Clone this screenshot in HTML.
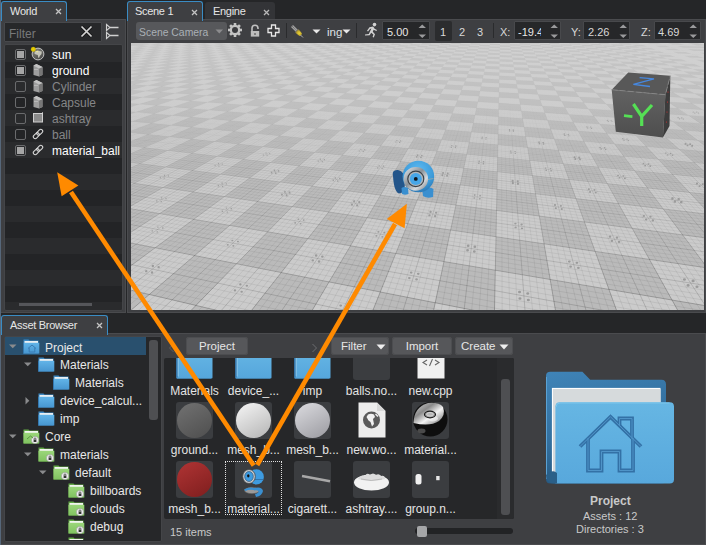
<!DOCTYPE html>
<html><head><meta charset="utf-8">
<style>
*{box-sizing:border-box;margin:0;padding:0}
html,body{width:706px;height:545px;overflow:hidden;background:#252628;font-family:"Liberation Sans",sans-serif;font-size:12px;color:#e6e6e6}
.a{position:absolute}
.tab{position:absolute;height:19px;background:#3b3c3f;border-radius:3px 3px 0 0}
.tab.act{border:1px solid #3a8cc4;border-bottom:none;background:#3e3f42}
.tab .t{position:absolute;top:3px;white-space:nowrap;font-size:11px;letter-spacing:-0.3px}
.tab .x{position:absolute;top:2px;font-size:12px;color:#bbb}
.panel{position:absolute;background:#3e3f42}
.list{position:absolute;background:#2a2b2d;border:1px solid #444548;border-radius:2px;overflow:hidden}
.row{position:absolute;left:0;right:0;height:16px}
.row.alt{background:#232426}
.cb{position:absolute;width:11px;height:11px;border:1px solid #6a6b6d;border-radius:2px}
.cb.on::after{content:"";position:absolute;left:1px;top:1px;width:7px;height:7px;background:#a6a6a6}
.rt{position:absolute;white-space:nowrap;font-size:12px}
.btn{position:absolute;background:#56575a;border-radius:3px;color:#e6e6e6;text-align:center;white-space:nowrap;font-size:11.5px;box-shadow:inset 0 0 0 1px #4c4d50}
.spin{position:absolute;background:#262729;border:1px solid #48494c;border-radius:1px;height:19px}
.lbl{position:absolute;white-space:nowrap;color:#d8d8d8}
.cell{position:absolute;width:37px;height:37px;background:#3a3c3f;border-radius:2px;overflow:hidden}
.clab{position:absolute;white-space:nowrap;font-size:12px;color:#e6e6e6}
</style></head><body>

<svg width="0" height="0" style="position:absolute"><defs>
<linearGradient id="gb" x1="0" y1="0" x2="0" y2="1"><stop offset="0" stop-color="#62b4e8"/><stop offset="1" stop-color="#4796d0"/></linearGradient>
<linearGradient id="gg" x1="0" y1="0" x2="0" y2="1"><stop offset="0" stop-color="#9bd77a"/><stop offset="1" stop-color="#80c260"/></linearGradient>
<linearGradient id="gbig" x1="0" y1="0" x2="0" y2="1"><stop offset="0" stop-color="#66b6e4"/><stop offset="1" stop-color="#55a6dc"/></linearGradient>
<symbol id="fb" viewBox="0 0 17 15"><path d="M0.5,0.5H5.5L6.5,1.5H15.5V14.5H0.5Z" fill="#3c88c2"/><rect x="1.5" y="2" width="13.5" height="2" fill="#e8eef2"/><path d="M0.5,3.8H16.3V14.5H0.5Z" fill="url(#gb)"/><path d="M0.5,3.8V14.5" stroke="#3478b0" stroke-width="1"/></symbol>
<symbol id="fg" viewBox="0 0 17 15"><path d="M0.5,0.5H5.5L6.5,1.5H15.5V14.5H0.5Z" fill="#62a845"/><rect x="1.5" y="2" width="13.5" height="2" fill="#f0f4ee"/><path d="M0.5,3.8H16.3V14.5H0.5Z" fill="url(#gg)"/><circle cx="12" cy="11" r="3.6" fill="#f2f2f2" stroke="#9a9a9a" stroke-width="0.6"/><rect x="10.6" y="10.6" width="2.8" height="2.4" fill="#333"/><path d="M11.1,10.7V9.8A0.9,0.9 0 0 1 12.9,9.8V10.7" fill="none" stroke="#333" stroke-width="0.8"/></symbol>
</defs></svg>
<!-- ============ WORLD PANEL ============ -->
<div class="panel" style="left:0;top:19px;width:126px;height:294px;border:1px solid #4a4b4e"></div>
<div class="tab act" style="left:1px;top:1px;width:66px;height:20px">
  <span class="t" style="left:8px">World</span>
</div>
<div class="a" style="left:4px;top:22px;width:98px;height:20px;background:#27282a;border:1px solid #47484b;border-radius:1px"></div>
<div class="a" style="left:9px;top:27px;color:#77787a">Filter</div>

<div class="list" style="left:4px;top:44px;width:119px;height:267px">
  <div class="rowNone" style="top:1px"></div>
  <div class="row alt" style="top:17px"></div>
  <div class="rowNone" style="top:33px"></div>
  <div class="row alt" style="top:49px"></div>
  <div class="rowNone" style="top:65px"></div>
  <div class="row alt" style="top:81px"></div>
  <div class="rowNone" style="top:97px"></div>
  <div class="row alt" style="top:113px"></div>
  <div class="rowNone" style="top:129px"></div>
  <div class="row alt" style="top:145px"></div>
  <div class="rowNone" style="top:161px"></div>
  <div class="row alt" style="top:177px"></div>
  <div class="rowNone" style="top:193px"></div>
  <div class="row alt" style="top:209px"></div>
  <div class="rowNone" style="top:225px"></div>
  <div class="row alt" style="top:241px"></div>
  <div class="a" style="left:14px;top:258px;width:73px;height:3px;background:#55565a"></div>
</div>
<div class="cb on" style="left:15px;top:49px"></div>
<div class="cb on" style="left:15px;top:65px"></div>
<div class="cb" style="left:15px;top:81px"></div>
<div class="cb" style="left:15px;top:97px"></div>
<div class="cb" style="left:15px;top:113px"></div>
<div class="cb" style="left:15px;top:129px"></div>
<div class="cb on" style="left:15px;top:145px"></div>

<!-- world icons -->
<svg class="a" style="left:80px;top:25px" width="13" height="13"><path d="M1.5,1.5L11.5,11.5M11.5,1.5L1.5,11.5" stroke="#1a1a1a" stroke-width="3.2"/><path d="M1.5,1.5L11.5,11.5M11.5,1.5L1.5,11.5" stroke="#d4d4d4" stroke-width="1.7"/></svg>
<svg class="a" style="left:105px;top:23px" width="15" height="17"><path d="M1.5,1.5L5,4.5L1.5,7.5Z M1.5,9.5L5,12.5L1.5,15.5Z" fill="none" stroke="#d0d0d0" stroke-width="1.1"/><path d="M5,4.5H13.5M5,12.5H13.5" stroke="#d0d0d0" stroke-width="1.3"/></svg>
<svg class="a" style="left:30px;top:46px" width="15" height="15"><defs><radialGradient id="sy" r="0.5"><stop offset="0" stop-color="#f0d800"/><stop offset="0.6" stop-color="#d8c000"/><stop offset="1" stop-color="#d8c000" stop-opacity="0"/></radialGradient><linearGradient id="gl" x1="0" y1="0" x2="0.6" y2="1"><stop offset="0" stop-color="#8a8a80"/><stop offset="1" stop-color="#4a4a4a"/></linearGradient></defs><circle cx="8" cy="8" r="5.9" fill="url(#gl)" stroke="#c0c0c0" stroke-width="1"/><path d="M4.5,6.5Q5,4.5 8,4.8L11.8,5.5L11.5,8L9.8,10L9,12L8.2,11.5L7.8,9L6,8.5L4.5,7.8Z" fill="#c4c4b8"/><path d="M5.5,5.8Q6.5,4.5 8.5,4.8L7.5,6.5Z" fill="#e8e4a0"/><circle cx="3.3" cy="3.3" r="3" fill="url(#sy)"/></svg>
<svg class="a" style="left:32px;top:63px" width="12" height="14"><path d="M1.5,2.5L4.5,1L10.5,4V12L7,13.5L1.5,12Z" fill="#9e9e9e"/><path d="M7,5.5L10.5,4V12L7,13.5Z" fill="#777"/><path d="M1.5,2.5L4.5,1L10.5,4L7,5.5Z" fill="#c4c4c4"/><path d="M2.5,6.5h1M4.5,6.5h1" stroke="#e0e0e0" stroke-width="0.8"/></svg>
<svg class="a" style="left:32px;top:79px" width="12" height="14"><path d="M1.5,2.5L4.5,1L10.5,4V12L7,13.5L1.5,12Z" fill="#9e9e9e"/><path d="M7,5.5L10.5,4V12L7,13.5Z" fill="#777"/><path d="M1.5,2.5L4.5,1L10.5,4L7,5.5Z" fill="#c4c4c4"/><path d="M2.5,6.5h1M4.5,6.5h1" stroke="#e0e0e0" stroke-width="0.8"/></svg>
<svg class="a" style="left:32px;top:95px" width="12" height="14"><path d="M1.5,2.5L4.5,1L10.5,4V12L7,13.5L1.5,12Z" fill="#9e9e9e"/><path d="M7,5.5L10.5,4V12L7,13.5Z" fill="#777"/><path d="M1.5,2.5L4.5,1L10.5,4L7,5.5Z" fill="#c4c4c4"/><path d="M2.5,6.5h1M4.5,6.5h1" stroke="#e0e0e0" stroke-width="0.8"/></svg>
<svg class="a" style="left:32px;top:112px" width="12" height="11"><rect x="1.5" y="1.5" width="9" height="8.5" fill="#8a8a8a" stroke="#cfcfcf" stroke-width="1"/><path d="M9.5,1.5L11,0.5" stroke="#ddd" stroke-width="1"/></svg>
<svg class="a" style="left:32px;top:128px" width="12" height="12"><g fill="none" stroke="#d8d8d8" stroke-width="1.1"><rect x="4.3" y="2.4" width="6.8" height="3.8" rx="1.9" transform="rotate(-45 7.7 4.3)"/><rect x="0.9" y="5.8" width="6.8" height="3.8" rx="1.9" transform="rotate(-45 4.3 7.7)"/></g></svg>
<svg class="a" style="left:32px;top:144px" width="12" height="12"><g fill="none" stroke="#d8d8d8" stroke-width="1.1"><rect x="4.3" y="2.4" width="6.8" height="3.8" rx="1.9" transform="rotate(-45 7.7 4.3)"/><rect x="0.9" y="5.8" width="6.8" height="3.8" rx="1.9" transform="rotate(-45 4.3 7.7)"/></g></svg>
<div class="rt" style="left:52px;top:48px;color:#fff">sun</div>
<div class="rt" style="left:52px;top:64px;color:#fff">ground</div>
<div class="rt" style="left:52px;top:80px;color:#858688">Cylinder</div>
<div class="rt" style="left:52px;top:96px;color:#858688">Capsule</div>
<div class="rt" style="left:52px;top:112px;color:#858688">ashtray</div>
<div class="rt" style="left:52px;top:128px;color:#858688">ball</div>
<div class="rt" style="left:52px;top:144px;color:#fff">material_ball</div>

<!-- ============ SCENE PANEL ============ -->
<div class="panel" style="left:127px;top:19px;width:579px;height:294px;border:1px solid #4a4b4e"></div>
<div class="tab act" style="left:127px;top:1px;width:76px;height:20px">
  <span class="t" style="left:7px">Scene 1</span>
</div>
<div class="tab" style="left:205px;top:2px;width:70px;height:17px;background:#333437">
  <span class="t" style="left:8px;top:3px">Engine</span>
</div>
<div class="a" style="left:136px;top:22px;width:91px;height:18px;background:#57585b;border-radius:3px"></div>
<div class="a" style="left:139px;top:27px;font-size:10.4px;color:#aab0b6;white-space:nowrap">Scene Camera</div>
<svg class="a" style="left:215px;top:29px" width="9" height="5"><path d="M0.5,0.5H8L4.25,4.5Z" fill="#8c8c8e"/></svg>
<!-- gear -->
<svg class="a" style="left:227px;top:22px" width="16" height="16"><g transform="translate(8 8)" fill="#c4c4c4"><circle r="5.3"/><g id="tooth"><rect x="-1.3" y="-7" width="2.6" height="3.5"/></g><use href="#tooth" transform="rotate(45)"/><use href="#tooth" transform="rotate(90)"/><use href="#tooth" transform="rotate(135)"/><use href="#tooth" transform="rotate(180)"/><use href="#tooth" transform="rotate(225)"/><use href="#tooth" transform="rotate(270)"/><use href="#tooth" transform="rotate(315)"/><circle r="3" fill="#3a3b3e"/></g></svg>
<!-- lock -->
<svg class="a" style="left:249px;top:24px" width="13" height="14"><path d="M3,7V4.2A3,3 0 0 1 9,4.2V5" fill="none" stroke="#c0c0c0" stroke-width="1.6"/><rect x="1.8" y="7" width="8.4" height="5.6" fill="#bdbdbd"/><rect x="5.4" y="9" width="1.2" height="2" fill="#555"/></svg>
<!-- plus -->
<svg class="a" style="left:267px;top:24px" width="13" height="13"><path d="M4.5,1H8.5V4.5H12V8.5H8.5V12H4.5V8.5H1V4.5H4.5Z" fill="#3a3a3c" stroke="#e8e8e8" stroke-width="1.3"/></svg>
<div class="a" style="left:286px;top:23px;width:1px;height:15px;background:#2a2b2d"></div>
<!-- flashlight -->
<svg class="a" style="left:290px;top:24px" width="15" height="15"><defs><radialGradient id="fy" cx="0.6" cy="0.6" r="0.6"><stop offset="0" stop-color="#f0d830"/><stop offset="0.6" stop-color="#b8a030"/><stop offset="1" stop-color="#6a6450"/></radialGradient></defs><path d="M2,2L7,7" stroke="#a0a0a0" stroke-width="2.8"/><path d="M2,2L7,7" stroke="#5a5a5a" stroke-width="1" stroke-dasharray="0.9 0.9"/><path d="M5,8.5L8.5,5L12,9.5Q11.5,12 9.5,12Z" fill="url(#fy)"/><path d="M10.5,11L13,13.5" stroke="#c8c8c8" stroke-width="0.8"/></svg>
<svg class="a" style="left:312px;top:29px" width="9" height="5"><path d="M0.5,0.5H8.5L4.5,4.5Z" fill="#e8e8e8"/></svg>
<div class="a" style="left:327px;top:26px;font-size:11.5px;color:#dfe2e6;white-space:nowrap">ing</div>
<svg class="a" style="left:342px;top:29px" width="9" height="5"><path d="M0.5,0.5H8.5L4.5,4.5Z" fill="#e8e8e8"/></svg>
<div class="a" style="left:356px;top:23px;width:1px;height:15px;background:#2a2b2d"></div>
<!-- runner -->
<svg class="a" style="left:363px;top:22px" width="16" height="16"><g fill="#d2d2d2"><circle cx="11.5" cy="2.6" r="1.8"/><path d="M6.5,5.2L10.2,4.6L11.6,6.8L14,8L13.4,9L10.6,7.8L9.8,9.8L12,12.2L10.8,15.4L9.6,15L10.4,12.6L8.2,10.8L6.6,13.2L2,13.6L2,12.4L5.8,12L8.4,6.6L7,7L5,9.4L4,8.8Z"/></g></svg>
<!--VP--><svg class="a" style="left:131px;top:43px" width="573" height="267" viewBox="0 0 573 267">
<defs><linearGradient id="fog" x1="0" y1="0" x2="0" y2="1"><stop offset="0" stop-color="#dcdcdc" stop-opacity="0.35"/><stop offset="0.25" stop-color="#d8d8d8" stop-opacity="0.18"/><stop offset="0.5" stop-color="#cccccc" stop-opacity="0.04"/><stop offset="1" stop-color="#c8c8c8" stop-opacity="0"/></linearGradient><linearGradient id="lg" gradientUnits="userSpaceOnUse" x1="0" y1="0" x2="0" y2="267"><stop offset="0" stop-color="#000" stop-opacity="0"/><stop offset="0.25" stop-color="#000" stop-opacity="0.03"/><stop offset="0.55" stop-color="#000" stop-opacity="0.13"/><stop offset="1" stop-color="#000" stop-opacity="0.26"/></linearGradient><linearGradient id="flg" gradientUnits="userSpaceOnUse" x1="0" y1="0" x2="0" y2="267"><stop offset="0" stop-color="#000" stop-opacity="0"/><stop offset="0.22" stop-color="#000" stop-opacity="0"/><stop offset="0.5" stop-color="#000" stop-opacity="0.06"/><stop offset="1" stop-color="#000" stop-opacity="0.10"/></linearGradient><linearGradient id="hlg" gradientUnits="userSpaceOnUse" x1="0" y1="0" x2="0" y2="267"><stop offset="0" stop-color="#000" stop-opacity="0"/><stop offset="0.22" stop-color="#000" stop-opacity="0"/><stop offset="0.5" stop-color="#000" stop-opacity="0.09"/><stop offset="1" stop-color="#000" stop-opacity="0.15"/></linearGradient></defs>
<rect width="573" height="267" fill="#bababa"/>
<path fill="#cbcbcb" d="M20.2,0.1L27.6,0.3L19.0,1.6L11.5,1.3ZM2.4,2.7L10.0,2.9L0.6,4.3L-7.3,4.0ZM35.8,-0.9L43.1,-0.7L35.1,0.6L27.6,0.3ZM19.0,1.6L26.7,1.9L17.8,3.2L10.0,2.9ZM0.6,4.3L8.5,4.7L-1.3,6.2L-9.4,5.8ZM35.1,0.6L42.7,0.8L34.4,2.1L26.7,1.9ZM17.8,3.2L25.7,3.5L16.5,5.0L8.5,4.7ZM-1.3,6.2L6.9,6.5L-3.4,8.1L-11.7,7.8ZM50.6,-0.4L58.2,-0.2L50.4,1.1L42.7,0.8ZM34.4,2.1L42.3,2.4L33.7,3.8L25.7,3.5ZM16.5,5.0L24.7,5.3L15.2,6.8L6.9,6.5ZM-3.4,8.1L5.1,8.5L-5.6,10.2L-14.2,9.8ZM65.5,-1.3L73.0,-1.1L65.8,0.1L58.2,-0.2ZM50.4,1.1L58.2,1.4L50.2,2.7L42.3,2.4ZM33.7,3.8L41.8,4.1L32.9,5.6L24.7,5.3ZM15.2,6.8L23.6,7.2L13.7,8.8L5.1,8.5ZM-5.6,10.2L3.2,10.6L-7.9,12.4L-16.8,12.0ZM65.8,0.1L73.5,0.4L66.1,1.6L58.2,1.4ZM50.2,2.7L58.2,3.0L50.0,4.4L41.8,4.1ZM32.9,5.6L41.3,5.9L32.1,7.5L23.6,7.2ZM13.7,8.8L22.4,9.2L12.1,10.9L3.2,10.6ZM-7.9,12.4L1.2,12.8L-10.4,14.8L-19.7,14.4ZM80.6,-0.9L88.3,-0.6L81.4,0.6L73.5,0.4ZM66.1,1.6L74.0,1.9L66.4,3.3L58.2,3.0ZM50.0,4.4L58.3,4.7L49.8,6.2L41.3,5.9ZM32.1,7.5L40.7,7.8L31.2,9.5L22.4,9.2ZM12.1,10.9L21.1,11.3L10.4,13.2L1.2,12.8ZM81.4,0.6L89.3,0.9L82.1,2.2L74.0,1.9ZM66.4,3.3L74.6,3.6L66.7,5.0L58.3,4.7ZM49.8,6.2L58.3,6.6L49.5,8.2L40.7,7.8ZM31.2,9.5L40.2,9.9L30.3,11.7L21.1,11.3ZM10.4,13.2L19.7,13.7L8.5,15.7L-1.0,15.3ZM96.1,-0.4L103.9,-0.1L97.3,1.2L89.3,0.9ZM82.1,2.2L90.3,2.5L82.9,3.9L74.6,3.6ZM66.7,5.0L75.2,5.4L67.0,6.9L58.3,6.6ZM49.5,8.2L58.4,8.6L49.2,10.3L40.2,9.9ZM30.3,11.7L39.5,12.1L29.2,14.1L19.7,13.7ZM8.5,15.7L18.2,16.2L6.5,18.4L-3.4,17.9ZM110.2,-1.3L118.0,-1.1L111.9,0.1L103.9,-0.1ZM97.3,1.2L105.4,1.4L98.6,2.8L90.3,2.5ZM82.9,3.9L91.4,4.2L83.8,5.7L75.2,5.4ZM67.0,6.9L75.8,7.2L67.4,8.9L58.4,8.6ZM49.2,10.3L58.4,10.7L48.9,12.5L39.5,12.1ZM29.2,14.1L38.9,14.5L28.1,16.7L18.2,16.2ZM6.5,18.4L16.6,18.9L4.4,21.3L-6.0,20.8ZM111.9,0.1L119.9,0.4L113.6,1.7L105.4,1.4ZM98.6,2.8L106.9,3.1L99.9,4.5L91.4,4.2ZM83.8,5.7L92.6,6.0L84.8,7.6L75.8,7.2ZM67.4,8.9L76.5,9.3L67.8,11.1L58.4,10.7ZM48.9,12.5L58.5,13.0L48.6,15.0L38.9,14.5ZM28.1,16.7L38.1,17.1L26.9,19.4L16.6,18.9ZM4.4,21.3L14.9,21.9L2.0,24.5L-8.8,23.9ZM125.9,-0.8L133.9,-0.6L128.1,0.7L119.9,0.4ZM113.6,1.7L121.9,2.0L115.4,3.3L106.9,3.1ZM99.9,4.5L108.6,4.8L101.4,6.3L92.6,6.0ZM84.8,7.6L93.8,7.9L85.8,9.6L76.5,9.3ZM67.8,11.1L77.2,11.5L68.2,13.4L58.5,13.0ZM48.6,15.0L58.6,15.4L48.3,17.6L38.1,17.1ZM26.9,19.4L37.3,19.9L25.6,22.4L14.9,21.9ZM2.0,24.5L13.0,25.1L-0.6,28.0L-11.8,27.3ZM128.1,0.7L136.3,0.9L130.3,2.3L121.9,2.0ZM115.4,3.3L124.0,3.6L117.4,5.1L108.6,4.8ZM101.4,6.3L110.4,6.7L103.0,8.3L93.8,7.9ZM85.8,9.6L95.2,10.0L86.9,11.9L77.2,11.5ZM68.2,13.4L78.0,13.8L68.6,15.9L58.6,15.4ZM48.3,17.6L58.6,18.1L47.9,20.5L37.3,19.9ZM25.6,22.4L36.5,23.0L24.1,25.7L13.0,25.1ZM-0.6,28.0L10.9,28.7L-3.4,31.8L-15.2,31.1ZM142.0,-0.3L150.1,-0.1L144.6,1.2L136.3,0.9ZM130.3,2.3L138.8,2.5L132.7,3.9L124.0,3.6ZM117.4,5.1L126.3,5.4L119.5,7.0L110.4,6.7ZM103.0,8.3L112.3,8.7L104.7,10.4L95.2,10.0ZM86.9,11.9L96.6,12.3L88.0,14.2L78.0,13.8ZM68.6,15.9L78.9,16.4L69.1,18.6L58.6,18.1ZM47.9,20.5L58.7,21.0L47.5,23.6L36.5,23.0ZM24.1,25.7L35.5,26.3L22.6,29.3L10.9,28.7ZM-3.4,31.8L8.6,32.5L-6.6,36.0L-18.9,35.2ZM155.4,-1.3L163.5,-1.0L158.4,0.2L150.1,-0.1ZM144.6,1.2L153.1,1.5L147.5,2.8L138.8,2.5ZM132.7,3.9L141.5,4.3L135.3,5.8L126.3,5.4ZM119.5,7.0L128.7,7.3L121.7,9.0L112.3,8.7ZM104.7,10.4L114.3,10.8L106.5,12.7L96.6,12.3ZM88.0,14.2L98.2,14.7L89.3,16.8L78.9,16.4ZM69.1,18.6L79.8,19.1L69.7,21.5L58.7,21.0ZM47.5,23.6L58.8,24.2L47.1,27.0L35.5,26.3ZM22.6,29.3L34.5,30.0L20.8,33.3L8.6,32.5ZM-6.6,36.0L6.1,36.8L-10.0,40.7L-23.0,39.8ZM158.4,0.2L166.8,0.5L161.6,1.8L153.1,1.5ZM147.5,2.8L156.2,3.1L150.5,4.6L141.5,4.3ZM135.3,5.8L144.4,6.1L138.0,7.7L128.7,7.3ZM121.7,9.0L131.3,9.4L124.1,11.2L114.3,10.8ZM106.5,12.7L116.5,13.1L108.5,15.1L98.2,14.7ZM89.3,16.8L99.9,17.3L90.7,19.6L79.8,19.1ZM69.7,21.5L80.8,22.1L70.2,24.8L58.8,24.2ZM47.1,27.0L58.9,27.6L46.6,30.7L34.5,30.0ZM20.8,33.3L33.3,34.1L18.9,37.7L6.1,36.8ZM-10.0,40.7L3.2,41.6L-13.9,46.0L-27.6,45.0ZM171.7,-0.8L180.0,-0.5L175.2,0.7L166.8,0.5ZM161.6,1.8L170.3,2.0L165.0,3.4L156.2,3.1ZM150.5,4.6L159.5,4.9L153.7,6.4L144.4,6.1ZM138.0,7.7L147.5,8.0L141.0,9.8L131.3,9.4ZM124.1,11.2L134.1,11.6L126.7,13.5L116.5,13.1ZM108.5,15.1L118.9,15.6L110.6,17.8L99.9,17.3ZM90.7,19.6L101.7,20.1L92.1,22.7L80.8,22.1ZM70.2,24.8L81.9,25.4L70.9,28.3L58.9,27.6ZM46.6,30.7L59.0,31.4L46.1,34.8L33.3,34.1ZM18.9,37.7L32.1,38.5L16.8,42.6L3.2,41.6ZM-13.9,46.0L0.1,47.0L-18.3,51.8L-32.8,50.7ZM175.2,0.7L183.8,1.0L179.0,2.3L170.3,2.0ZM165.0,3.4L174.0,3.7L168.7,5.2L159.5,4.9ZM153.7,6.4L163.1,6.7L157.1,8.4L147.5,8.0ZM141.0,9.8L150.8,10.1L144.2,12.0L134.1,11.6ZM126.7,13.5L137.1,14.0L129.5,16.0L118.9,15.6ZM110.6,17.8L121.5,18.3L112.9,20.7L101.7,20.1ZM92.1,22.7L103.7,23.2L93.8,26.0L81.9,25.4ZM70.9,28.3L83.1,28.9L71.6,32.1L59.0,31.4ZM46.1,34.8L59.1,35.6L45.5,39.4L32.1,38.5ZM16.8,42.6L30.7,43.5L14.4,48.0L0.1,47.0ZM188.4,-0.3L196.8,-0.0L192.5,1.3L183.8,1.0ZM179.0,2.3L187.9,2.6L183.0,4.0L174.0,3.7ZM168.7,5.2L177.9,5.5L172.6,7.1L163.1,6.7ZM157.1,8.4L166.9,8.8L160.8,10.5L150.8,10.1ZM144.2,12.0L154.4,12.4L147.6,14.4L137.1,14.0ZM129.5,16.0L140.3,16.5L132.6,18.8L121.5,18.3ZM112.9,20.7L124.3,21.2L115.4,23.8L103.7,23.2ZM93.8,26.0L105.9,26.6L95.6,29.6L83.1,28.9ZM71.6,32.1L84.4,32.9L72.3,36.4L59.1,35.6ZM45.5,39.4L59.2,40.3L44.8,44.5L30.7,43.5ZM14.4,48.0L29.1,49.1L11.7,54.2L-3.5,53.0ZM201.0,-1.2L209.4,-1.0L205.4,0.2L196.8,-0.0ZM192.5,1.3L201.3,1.5L196.9,2.9L187.9,2.6ZM183.0,4.0L192.2,4.3L187.3,5.8L177.9,5.5ZM172.6,7.1L182.2,7.4L176.7,9.1L166.9,8.8ZM160.8,10.5L170.9,10.9L164.8,12.8L154.4,12.4ZM147.6,14.4L158.3,14.8L151.3,17.0L140.3,16.5ZM132.6,18.8L143.9,19.3L135.9,21.8L124.3,21.2ZM115.4,23.8L127.4,24.4L118.2,27.3L105.9,26.6ZM95.6,29.6L108.3,30.3L97.5,33.6L84.4,32.9ZM72.3,36.4L85.9,37.2L73.2,41.2L59.2,40.3ZM44.8,44.5L59.3,45.5L44.1,50.2L29.1,49.1ZM11.7,54.2L27.3,55.4L8.7,61.1L-7.5,59.8ZM205.4,0.2L214.1,0.5L210.1,1.8L201.3,1.5ZM196.9,2.9L206.0,3.2L201.5,4.6L192.2,4.3ZM187.3,5.8L196.9,6.2L192.0,7.8L182.2,7.4ZM176.7,9.1L186.7,9.5L181.2,11.3L170.9,10.9ZM164.8,12.8L175.3,13.2L169.1,15.3L158.3,14.8ZM151.3,17.0L162.4,17.5L155.3,19.8L143.9,19.3ZM135.9,21.8L147.7,22.3L139.5,25.0L127.4,24.4ZM118.2,27.3L130.7,27.9L121.2,31.0L108.3,30.3ZM97.5,33.6L110.9,34.4L99.7,38.1L85.9,37.2ZM73.2,41.2L87.5,42.1L74.2,46.5L59.3,45.5ZM44.1,50.2L59.5,51.3L43.3,56.6L27.3,55.4ZM8.7,61.1L25.3,62.5L5.2,69.1L-12.1,67.6ZM217.9,-0.7L226.5,-0.5L222.9,0.8L214.1,0.5ZM210.1,1.8L219.1,2.1L215.2,3.5L206.0,3.2ZM201.5,4.6L211.0,4.9L206.5,6.5L196.9,6.2ZM192.0,7.8L201.9,8.1L196.9,9.9L186.7,9.5ZM181.2,11.3L191.6,11.7L186.1,13.7L175.3,13.2ZM169.1,15.3L180.1,15.7L173.8,18.0L162.4,17.5ZM155.3,19.8L167.0,20.3L159.7,22.9L147.7,22.3ZM139.5,25.0L151.9,25.6L143.5,28.6L130.7,27.9ZM121.2,31.0L134.4,31.7L124.5,35.2L110.9,34.4ZM99.7,38.1L113.8,38.9L102.1,43.0L87.5,42.1ZM74.2,46.5L89.3,47.5L75.2,52.5L59.5,51.3ZM43.3,56.6L59.7,57.9L42.3,64.0L25.3,62.5ZM5.2,69.1L23.0,70.7L1.2,78.4L-17.4,76.6ZM222.9,0.8L231.8,1.0L228.2,2.4L219.1,2.1ZM215.2,3.5L224.5,3.8L220.5,5.3L211.0,4.9ZM206.5,6.5L216.3,6.8L211.9,8.5L201.9,8.1ZM196.9,9.9L207.2,10.2L202.2,12.1L191.6,11.7ZM186.1,13.7L196.9,14.1L191.3,16.2L180.1,15.7ZM173.8,18.0L185.3,18.5L178.8,20.9L167.0,20.3ZM159.7,22.9L171.9,23.5L164.5,26.2L151.9,25.6ZM143.5,28.6L156.5,29.2L147.8,32.5L134.4,31.7ZM124.5,35.2L138.4,36.0L128.2,39.8L113.8,38.9ZM102.1,43.0L117.1,44.0L104.8,48.6L89.3,47.5ZM75.2,52.5L91.4,53.6L76.5,59.2L59.7,57.9ZM42.3,64.0L59.8,65.4L41.3,72.4L23.0,70.7ZM1.2,78.4L20.3,80.2L-3.5,89.2L-23.5,87.0ZM235.2,-0.2L244.0,0.0L240.8,1.3L231.8,1.0ZM228.2,2.4L237.5,2.7L233.9,4.1L224.5,3.8ZM220.5,5.3L230.2,5.6L226.2,7.2L216.3,6.8ZM211.9,8.5L222.1,8.9L217.6,10.6L207.2,10.2ZM202.2,12.1L212.9,12.5L208.0,14.5L196.9,14.1ZM191.3,16.2L202.6,16.7L196.9,19.0L185.3,18.5ZM178.8,20.9L190.9,21.4L184.3,24.1L171.9,23.5ZM164.5,26.2L177.3,26.9L169.7,29.9L156.5,29.2ZM147.8,32.5L161.5,33.2L152.6,36.8L138.4,36.0ZM128.2,39.8L143.0,40.7L132.4,45.0L117.1,44.0ZM104.8,48.6L120.7,49.7L107.9,54.8L91.4,53.6ZM76.5,59.2L93.7,60.6L77.8,66.9L59.8,65.4ZM41.3,72.4L60.1,74.1L40.0,82.2L20.3,80.2ZM-3.5,89.2L17.1,91.4L-9.1,102.0L-30.8,99.4ZM247.1,-1.2L255.8,-1.0L252.9,0.3L244.0,0.0ZM240.8,1.3L249.9,1.6L246.8,2.9L237.5,2.7ZM233.9,4.1L243.5,4.4L240.0,5.9L230.2,5.6ZM226.2,7.2L236.3,7.5L232.4,9.2L222.1,8.9ZM217.6,10.6L228.2,11.0L223.8,12.9L212.9,12.5ZM208.0,14.5L219.2,15.0L214.2,17.2L202.6,16.7ZM196.9,19.0L208.8,19.5L203.1,22.0L190.9,21.4ZM184.3,24.1L197.0,24.7L190.4,27.5L177.3,26.9ZM169.7,29.9L183.2,30.6L175.5,34.0L161.5,33.2ZM152.6,36.8L167.1,37.7L158.0,41.6L143.0,40.7ZM132.4,45.0L148.0,46.0L137.0,50.8L120.7,49.7ZM107.9,54.8L124.9,56.1L111.4,61.9L93.7,60.6ZM77.8,66.9L96.3,68.5L79.5,75.8L60.1,74.1ZM40.0,82.2L60.3,84.2L38.5,93.7L17.1,91.4ZM-9.1,102.0L13.4,104.6L-15.8,117.4L-39.6,114.2ZM252.9,0.3L262.0,0.5L259.2,1.9L249.9,1.6ZM246.8,2.9L256.3,3.2L253.2,4.7L243.5,4.4ZM240.0,5.9L249.9,6.2L246.5,7.9L236.3,7.5ZM232.4,9.2L242.9,9.6L239.0,11.4L228.2,11.0ZM223.8,12.9L234.9,13.4L230.5,15.4L219.2,15.0ZM214.2,17.2L225.9,17.7L220.9,20.0L208.8,19.5ZM203.1,22.0L215.6,22.5L209.8,25.3L197.0,24.7ZM190.4,27.5L203.7,28.2L197.0,31.4L183.2,30.6ZM175.5,34.0L189.8,34.8L181.9,38.5L167.1,37.7ZM158.0,41.6L173.4,42.6L164.0,47.0L148.0,46.0ZM137.0,50.8L153.7,51.9L142.2,57.3L124.9,56.1ZM111.4,61.9L129.6,63.4L115.4,70.1L96.3,68.5ZM79.5,75.8L99.4,77.7L81.3,86.2L60.3,84.2ZM38.5,93.7L60.6,96.1L36.8,107.4L13.4,104.6ZM-15.8,117.4L8.9,120.6L-24.1,136.2L-50.3,132.4ZM264.6,-0.7L273.5,-0.5L271.1,0.8L262.0,0.5ZM259.2,1.9L268.5,2.1L265.8,3.5L256.3,3.2ZM253.2,4.7L263.0,5.0L260.0,6.6L249.9,6.2ZM246.5,7.9L256.8,8.2L253.5,10.0L242.9,9.6ZM239.0,11.4L249.9,11.8L246.1,13.8L234.9,13.4ZM230.5,15.4L242.1,15.9L237.8,18.2L225.9,17.7ZM220.9,20.0L233.2,20.5L228.3,23.1L215.6,22.5ZM209.8,25.3L222.9,25.9L217.2,28.9L203.7,28.2ZM197.0,31.4L211.0,32.1L204.3,35.6L189.8,34.8ZM181.9,38.5L197.0,39.4L189.1,43.5L173.4,42.6ZM164.0,47.0L180.3,48.1L170.7,53.1L153.7,51.9ZM142.2,57.3L160.1,58.6L148.2,64.8L129.6,63.4ZM115.4,70.1L135.0,71.7L120.0,79.5L99.4,77.7ZM81.3,86.2L103.0,88.4L83.5,98.5L60.6,96.1ZM36.8,107.4L61.0,110.2L34.6,124.0L8.9,120.6ZM-24.1,136.2L3.3,140.3L-34.4,160.0L-63.7,155.0ZM271.1,0.8L280.3,1.1L278.0,2.4L268.5,2.1ZM265.8,3.5L275.5,3.8L273.0,5.3L263.0,5.0ZM260.0,6.6L270.2,6.9L267.3,8.6L256.8,8.2ZM253.5,10.0L264.3,10.4L261.0,12.2L249.9,11.8ZM246.1,13.8L257.5,14.2L253.8,16.4L242.1,15.9ZM237.8,18.2L249.9,18.7L245.7,21.1L233.2,20.5ZM228.3,23.1L241.2,23.7L236.3,26.5L222.9,25.9ZM217.2,28.9L231.0,29.5L225.4,32.8L211.0,32.1ZM204.3,35.6L219.2,36.4L212.5,40.3L197.0,39.4ZM189.1,43.5L205.2,44.5L197.1,49.2L180.3,48.1ZM170.7,53.1L188.2,54.3L178.4,60.0L160.1,58.6ZM148.2,64.8L167.4,66.3L155.1,73.4L135.0,71.7ZM120.0,79.5L141.2,81.4L125.4,90.6L103.0,88.4ZM83.5,98.5L107.3,101.1L86.2,113.2L61.0,110.2ZM34.6,124.0L61.5,127.5L32.0,144.5L3.3,140.3ZM282.5,-0.2L291.7,0.1L289.7,1.4L280.3,1.1ZM278.0,2.4L287.6,2.7L285.4,4.1L275.5,3.8ZM273.0,5.3L283.0,5.7L280.6,7.3L270.2,6.9ZM267.3,8.6L278.0,9.0L275.2,10.8L264.3,10.4ZM261.0,12.2L272.2,12.7L269.1,14.7L257.5,14.2ZM253.8,16.4L265.8,16.9L262.2,19.2L249.9,18.7ZM245.7,21.1L258.4,21.6L254.3,24.3L241.2,23.7ZM236.3,26.5L249.9,27.2L245.1,30.2L231.0,29.5ZM225.4,32.8L240.0,33.6L234.4,37.2L219.2,36.4ZM212.5,40.3L228.3,41.2L221.6,45.5L205.2,44.5ZM197.1,49.2L214.2,50.3L206.1,55.5L188.2,54.3ZM178.4,60.0L197.2,61.3L187.1,67.8L167.4,66.3ZM155.1,73.4L175.9,75.1L163.1,83.4L141.2,81.4ZM125.4,90.6L148.6,92.8L131.8,103.7L107.3,101.1ZM86.2,113.2L112.4,116.3L89.4,131.2L61.5,127.5ZM32.0,144.5L62.0,149.0L28.6,170.6L-3.7,165.1ZM293.6,-1.2L302.6,-0.9L300.9,0.3L291.7,0.1ZM289.7,1.4L299.2,1.6L297.3,3.0L287.6,2.7ZM285.4,4.1L295.3,4.5L293.3,6.0L283.0,5.7ZM280.6,7.3L291.1,7.6L288.7,9.3L278.0,9.0ZM275.2,10.8L286.3,11.2L283.7,13.1L272.2,12.7ZM269.1,14.7L280.9,15.1L277.9,17.3L265.8,16.9ZM262.2,19.2L274.7,19.7L271.3,22.2L258.4,21.6ZM254.3,24.3L267.7,24.9L263.7,27.8L249.9,27.2ZM245.1,30.2L259.5,31.0L254.9,34.4L240.0,33.6ZM234.4,37.2L249.8,38.1L244.4,42.1L228.3,41.2ZM221.6,45.5L238.4,46.5L231.8,51.4L214.2,50.3ZM206.1,55.5L224.5,56.8L216.4,62.7L197.2,61.3ZM187.1,67.8L207.4,69.4L197.2,76.9L175.9,75.1ZM163.1,83.4L185.7,85.5L172.5,95.2L148.6,92.8ZM131.8,103.7L157.3,106.4L139.6,119.5L112.4,116.3ZM89.4,131.2L118.6,135.0L93.5,153.6L62.0,149.0ZM28.6,170.6L62.7,176.3L24.2,204.8L-12.8,197.5ZM300.9,0.3L310.3,0.6L308.7,1.9L299.2,1.6ZM297.3,3.0L307.1,3.3L305.4,4.8L295.3,4.5ZM293.3,6.0L303.6,6.3L301.7,8.0L291.1,7.6ZM288.7,9.3L299.7,9.7L297.5,11.6L286.3,11.2ZM283.7,13.1L295.2,13.5L292.8,15.6L280.9,15.1ZM277.9,17.3L290.2,17.8L287.4,20.2L274.7,19.7ZM271.3,22.2L284.5,22.8L281.3,25.5L267.7,24.9ZM263.7,27.8L277.8,28.5L274.1,31.7L259.5,31.0ZM254.9,34.4L270.1,35.2L265.7,38.9L249.8,38.1ZM244.4,42.1L260.9,43.1L255.6,47.6L238.4,46.5ZM231.8,51.4L249.8,52.5L243.4,58.1L224.5,56.8ZM216.4,62.7L236.3,64.2L228.3,71.0L207.4,69.4ZM197.2,76.9L219.3,78.8L209.1,87.6L185.7,85.5ZM172.5,95.2L197.3,97.6L183.8,109.3L157.3,106.4ZM139.6,119.5L168.0,122.9L149.2,139.0L118.6,135.0ZM93.5,153.6L126.5,158.5L98.7,182.4L62.7,176.3ZM24.2,204.8L63.6,212.5L18.2,251.5L-25.2,241.3ZM311.8,-0.7L321.0,-0.4L319.8,0.9L310.3,0.6ZM308.7,1.9L318.5,2.2L317.1,3.6L307.1,3.3ZM305.4,4.8L315.6,5.1L314.1,6.7L303.6,6.3ZM301.7,8.0L312.5,8.3L310.8,10.1L299.7,9.7ZM297.5,11.6L308.9,12.0L307.0,14.0L295.2,13.5ZM292.8,15.6L304.9,16.1L302.7,18.3L290.2,17.8ZM287.4,20.2L300.4,20.8L297.8,23.4L284.5,22.8ZM281.3,25.5L295.1,26.2L292.2,29.2L277.8,28.5ZM274.1,31.7L289.0,32.4L285.6,36.0L270.1,35.2ZM265.7,38.9L281.8,39.8L277.7,44.0L260.9,43.1ZM255.6,47.6L273.2,48.6L268.2,53.7L249.8,52.5ZM243.4,58.1L262.7,59.4L256.6,65.7L236.3,64.2ZM228.3,71.0L249.8,72.7L242.0,80.7L219.3,78.8ZM209.1,87.6L233.2,89.7L223.0,100.1L197.3,97.6ZM183.8,109.3L211.3,112.2L197.5,126.4L168.0,122.9ZM149.2,139.0L181.1,143.2L161.2,163.6L126.5,158.5ZM98.7,182.4L136.7,188.8L105.6,220.7L63.6,212.5ZM18.2,251.5L64.9,262.4L9.5,319.3L-43.0,304.1ZM319.8,0.9L329.4,1.1L328.3,2.5L318.5,2.2ZM317.1,3.6L327.2,3.9L326.0,5.4L315.6,5.1ZM314.1,6.7L324.7,7.0L323.4,8.7L312.5,8.3ZM310.8,10.1L322.0,10.5L320.5,12.4L308.9,12.0ZM307.0,14.0L319.0,14.4L317.3,16.5L304.9,16.1ZM302.7,18.3L315.5,18.8L313.5,21.3L300.4,20.8ZM297.8,23.4L311.5,23.9L309.2,26.8L295.1,26.2ZM292.2,29.2L306.8,29.9L304.2,33.2L289.0,32.4ZM285.6,36.0L301.4,36.8L298.3,40.7L281.8,39.8ZM277.7,44.0L294.9,45.0L291.2,49.7L273.2,48.6ZM268.2,53.7L287.1,55.0L282.6,60.7L262.7,59.4ZM256.6,65.7L277.5,67.2L271.9,74.4L249.8,72.7ZM242.0,80.7L265.4,82.6L258.1,92.0L233.2,89.7ZM223.0,100.1L249.7,102.8L239.9,115.3L211.3,112.2ZM197.5,126.4L228.3,130.0L214.5,147.6L181.1,143.2ZM161.2,163.6L197.7,169.0L176.9,195.6L136.7,188.8ZM105.6,220.7L150.3,229.5L115.2,274.2L64.9,262.4ZM330.4,-0.2L339.8,0.1L339.1,1.4L329.4,1.1ZM328.3,2.5L338.2,2.8L337.4,4.2L327.2,3.9ZM326.0,5.4L336.5,5.7L335.5,7.4L324.7,7.0ZM323.4,8.7L334.5,9.1L333.4,10.9L322.0,10.5ZM320.5,12.4L332.3,12.8L331.1,14.8L319.0,14.4ZM317.3,16.5L329.8,17.0L328.4,19.4L315.5,18.8ZM313.5,21.3L326.9,21.9L325.3,24.5L311.5,23.9ZM309.2,26.8L323.6,27.4L321.7,30.6L306.8,29.9ZM304.2,33.2L319.7,33.9L317.6,37.6L301.4,36.8ZM298.3,40.7L315.2,41.6L312.6,46.0L294.9,45.0ZM291.2,49.7L309.7,50.9L306.5,56.2L287.1,55.0ZM282.6,60.7L303.0,62.1L299.1,68.8L277.5,67.2ZM271.9,74.4L294.6,76.2L289.6,84.7L265.4,82.6ZM258.1,92.0L283.9,94.3L277.3,105.5L249.7,102.8ZM239.9,115.3L269.6,118.5L260.5,133.8L228.3,130.0ZM214.5,147.6L249.5,152.2L236.2,174.7L197.7,169.0ZM176.9,195.6L219.5,202.8L198.1,238.9L150.3,229.5ZM340.6,-1.1L349.9,-0.9L349.4,0.4L339.8,0.1ZM339.1,1.4L348.9,1.7L348.3,3.1L338.2,2.8ZM337.4,4.2L347.7,4.5L347.1,6.1L336.5,5.7ZM335.5,7.4L346.5,7.7L345.8,9.4L334.5,9.1ZM333.4,10.9L345.0,11.3L344.2,13.2L332.3,12.8ZM331.1,14.8L343.4,15.3L342.5,17.5L329.8,17.0ZM328.4,19.4L341.6,19.9L340.5,22.4L326.9,21.9ZM325.3,24.5L339.4,25.2L338.2,28.1L323.6,27.4ZM321.7,30.6L337.0,31.3L335.6,34.7L319.7,33.9ZM317.6,37.6L334.1,38.5L332.4,42.6L315.2,41.6ZM312.6,46.0L330.6,47.1L328.6,52.0L309.7,50.9ZM306.5,56.2L326.4,57.5L324.0,63.6L303.0,62.1ZM299.1,68.8L321.2,70.4L318.1,78.1L294.6,76.2ZM289.6,84.7L314.6,86.8L310.6,96.7L283.9,94.3ZM277.3,105.5L305.9,108.3L300.5,121.8L269.6,118.5ZM260.5,133.8L294.1,137.8L286.3,157.0L249.5,152.2ZM236.2,174.7L276.8,180.7L264.8,210.4L219.5,202.8ZM198.1,238.9L249.3,248.9L228.4,300.8L169.5,287.0ZM349.4,0.4L359.1,0.6L358.8,2.0L348.9,1.7ZM348.3,3.1L358.5,3.4L358.2,4.8L347.7,4.5ZM347.1,6.1L357.9,6.4L357.6,8.1L346.5,7.7ZM345.8,9.4L357.2,9.8L356.8,11.7L345.0,11.3ZM344.2,13.2L356.4,13.7L355.9,15.8L343.4,15.3ZM342.5,17.5L355.4,18.0L354.9,20.4L341.6,19.9ZM340.5,22.4L354.4,23.0L353.8,25.8L339.4,25.2ZM338.2,28.1L353.2,28.8L352.5,32.0L337.0,31.3ZM335.6,34.7L351.7,35.5L350.9,39.4L334.1,38.5ZM332.4,42.6L350.0,43.5L349.1,48.1L330.6,47.1ZM328.6,52.0L348.0,53.2L346.8,58.8L326.4,57.5ZM324.0,63.6L345.5,65.0L344.0,72.0L321.2,70.4ZM318.1,78.1L342.3,79.9L340.4,88.9L314.6,86.8ZM310.6,96.7L338.2,99.2L335.7,111.2L305.9,108.3ZM300.5,121.8L332.7,125.2L329.2,141.9L294.1,137.8ZM286.3,157.0L324.9,162.1L319.6,187.0L276.8,180.7ZM264.8,210.4L313.0,218.6L304.2,259.7L249.3,248.9ZM359.4,-0.6L369.0,-0.4L369.0,0.9L359.1,0.6ZM358.8,2.0L368.9,2.3L368.9,3.7L358.5,3.4ZM358.2,4.8L368.9,5.2L368.8,6.8L357.9,6.4ZM357.6,8.1L368.8,8.4L368.8,10.2L357.2,9.8ZM356.8,11.7L368.7,12.1L368.7,14.1L356.4,13.7ZM355.9,15.8L368.6,16.2L368.6,18.5L355.4,18.0ZM354.9,20.4L368.5,21.0L368.5,23.6L354.4,23.0ZM353.8,25.8L368.4,26.4L368.4,29.5L353.2,28.8ZM352.5,32.0L368.3,32.8L368.2,36.4L351.7,35.5ZM350.9,39.4L368.1,40.3L368.1,44.5L350.0,43.5ZM349.1,48.1L368.0,49.2L367.9,54.4L348.0,53.2ZM346.8,58.8L367.7,60.1L367.6,66.6L345.5,65.0ZM344.0,72.0L367.5,73.8L367.3,81.9L342.3,79.9ZM340.4,88.9L367.1,91.2L366.9,101.8L338.2,99.2ZM335.7,111.2L366.6,114.2L366.3,128.8L332.7,125.2ZM329.2,141.9L366.0,146.3L365.5,167.4L324.9,162.1ZM319.6,187.0L365.0,193.7L364.3,227.2L313.0,218.6ZM304.2,259.7L363.4,271.3L362.2,332.1L292.4,315.7ZM369.0,0.9L378.9,1.2L379.1,2.5L368.9,2.3ZM368.9,3.7L379.4,4.0L379.6,5.5L368.9,5.2ZM368.8,6.8L379.9,7.1L380.2,8.8L368.8,8.4ZM368.8,10.2L380.5,10.6L380.8,12.5L368.7,12.1ZM368.7,14.1L381.2,14.5L381.6,16.7L368.6,16.2ZM368.6,18.5L382.0,19.0L382.4,21.5L368.5,21.0ZM368.5,23.6L382.8,24.2L383.3,27.1L368.4,26.4ZM368.4,29.5L383.9,30.2L384.4,33.5L368.3,32.8ZM368.2,36.4L385.1,37.2L385.7,41.2L368.1,40.3ZM368.1,44.5L386.5,45.5L387.3,50.3L368.0,49.2ZM367.9,54.4L388.2,55.6L389.2,61.5L367.7,60.1ZM367.6,66.6L390.4,68.1L391.6,75.5L367.5,73.8ZM367.3,81.9L393.1,83.9L394.7,93.5L367.1,91.2ZM366.9,101.8L396.6,104.5L398.8,117.4L366.6,114.2ZM366.3,128.8L401.4,132.6L404.5,150.8L366.0,146.3ZM365.5,167.4L408.3,173.1L413.1,200.8L365.0,193.7ZM364.3,227.2L419.2,236.5L427.3,283.9L363.4,271.3ZM378.7,-0.1L388.5,0.1L389.0,1.5L378.9,1.2ZM379.1,2.5L389.5,2.8L390.0,4.3L379.4,4.0ZM379.6,5.5L390.6,5.8L391.1,7.4L379.9,7.1ZM380.2,8.8L391.8,9.2L392.4,11.0L380.5,10.6ZM380.8,12.5L393.1,12.9L393.9,15.0L381.2,14.5ZM381.6,16.7L394.7,17.2L395.5,19.6L382.0,19.0ZM382.4,21.5L396.5,22.1L397.4,24.8L382.8,24.2ZM383.3,27.1L398.5,27.7L399.7,30.9L383.9,30.2ZM384.4,33.5L400.9,34.3L402.3,38.0L385.1,37.2ZM385.7,41.2L403.7,42.1L405.4,46.6L386.5,45.5ZM387.3,50.3L407.1,51.5L409.1,56.9L388.2,55.6ZM389.2,61.5L411.3,63.0L413.8,69.7L390.4,68.1ZM391.6,75.5L416.5,77.3L419.7,86.0L393.1,83.9ZM394.7,93.5L423.3,95.9L427.4,107.3L396.6,104.5ZM398.8,117.4L432.3,120.7L438.0,136.5L401.4,132.6ZM404.5,150.8L445.0,155.6L453.5,179.0L408.3,173.1ZM413.1,200.8L464.1,208.4L478.0,246.4L419.2,236.5ZM388.0,-1.1L397.7,-0.9L398.4,0.4L388.5,0.1ZM389.0,1.5L399.2,1.7L399.9,3.1L389.5,2.8ZM390.0,4.3L400.8,4.6L401.6,6.2L390.6,5.8ZM391.1,7.4L402.5,7.8L403.5,9.5L391.8,9.2ZM392.4,11.0L404.5,11.4L405.6,13.4L393.1,12.9ZM393.9,15.0L406.8,15.5L408.0,17.7L394.7,17.2ZM395.5,19.6L409.4,20.1L410.8,22.7L396.5,22.1ZM397.4,24.8L412.3,25.4L414.0,28.4L398.5,27.7ZM399.7,30.9L415.8,31.6L417.7,35.1L400.9,34.3ZM402.3,38.0L419.8,38.9L422.1,43.1L403.7,42.1ZM405.4,46.6L424.7,47.6L427.5,52.7L407.1,51.5ZM409.1,56.9L430.5,58.2L434.0,64.4L411.3,63.0ZM413.8,69.7L437.9,71.4L442.2,79.2L416.5,77.3ZM419.7,86.0L447.2,88.1L452.8,98.3L423.3,95.9ZM427.4,107.3L459.4,110.2L467.2,124.1L432.3,120.7ZM438.0,136.5L476.3,140.6L487.4,160.6L445.0,155.6ZM453.5,179.0L501.1,185.2L518.5,216.4L464.1,208.4ZM478.0,246.4L541.0,257.0L571.7,312.2L496.5,297.5ZM398.4,0.4L408.5,0.7L409.5,2.0L399.2,1.7ZM399.9,3.1L410.5,3.4L411.7,4.9L400.8,4.6ZM401.6,6.2L412.8,6.5L414.1,8.2L402.5,7.8ZM403.5,9.5L415.4,9.9L416.8,11.8L404.5,11.4ZM405.6,13.4L418.3,13.8L419.9,15.9L406.8,15.5ZM408.0,17.7L421.6,18.2L423.4,20.6L409.4,20.1ZM410.8,22.7L425.4,23.2L427.5,26.1L412.3,25.4ZM414.0,28.4L429.7,29.1L432.2,32.4L415.8,31.6ZM417.7,35.1L434.9,35.9L437.8,39.8L419.8,38.9ZM422.1,43.1L440.9,44.0L444.4,48.7L424.7,47.6ZM427.5,52.7L448.3,53.9L452.5,59.6L430.5,58.2ZM434.0,64.4L457.3,65.9L462.7,73.1L437.9,71.4ZM442.2,79.2L468.7,81.1L475.6,90.3L447.2,88.1ZM452.8,98.3L483.5,100.9L492.7,113.2L459.4,110.2ZM467.2,124.1L503.5,127.7L516.4,144.9L476.3,140.6ZM487.4,160.6L532.1,165.9L551.6,191.9L501.1,185.2ZM518.5,216.4L576.3,224.9L608.9,268.5L541.0,257.0ZM407.5,-0.6L417.4,-0.3L418.7,1.0L408.5,0.7ZM409.5,2.0L419.9,2.3L421.3,3.7L410.5,3.4ZM411.7,4.9L422.7,5.2L424.2,6.8L412.8,6.5ZM414.1,8.2L425.8,8.5L427.5,10.3L415.4,9.9ZM416.8,11.8L429.3,12.2L431.2,14.2L418.3,13.8ZM419.9,15.9L433.2,16.4L435.4,18.7L421.6,18.2ZM423.4,20.6L437.7,21.2L440.2,23.8L425.4,23.2ZM427.5,26.1L442.9,26.7L445.8,29.8L429.7,29.1ZM432.2,32.4L448.9,33.1L452.4,36.8L434.9,35.9ZM437.8,39.8L456.1,40.7L460.2,45.0L440.9,44.0ZM444.4,48.7L464.7,49.8L469.6,55.1L448.3,53.9ZM452.5,59.6L475.1,60.9L481.3,67.5L457.3,65.9ZM462.7,73.1L488.2,74.8L496.0,83.1L468.7,81.1ZM475.6,90.3L505.0,92.6L515.3,103.6L483.5,100.9ZM492.7,113.2L527.3,116.3L541.5,131.4L503.5,127.7ZM516.4,144.9L558.5,149.4L579.2,171.4L532.1,165.9ZM551.6,191.9L605.0,198.9L638.2,234.1L576.3,224.9ZM418.7,1.0L429.0,1.2L430.5,2.6L419.9,2.3ZM421.3,3.7L432.2,4.0L433.9,5.6L422.7,5.2ZM424.2,6.8L435.7,7.2L437.7,8.9L425.8,8.5ZM427.5,10.3L439.7,10.7L441.9,12.6L429.3,12.2ZM431.2,14.2L444.3,14.7L446.7,16.9L433.2,16.4ZM435.4,18.7L449.4,19.2L452.3,21.7L437.7,21.2ZM440.2,23.8L455.3,24.4L458.6,27.4L442.9,26.7ZM445.8,29.8L462.2,30.5L466.0,33.9L448.9,33.1ZM452.4,36.8L470.2,37.6L474.8,41.6L456.1,40.7ZM460.2,45.0L479.9,46.1L485.4,50.9L464.7,49.8ZM469.6,55.1L491.5,56.3L498.3,62.3L475.1,60.9ZM481.3,67.5L505.9,69.0L514.5,76.6L488.2,74.8ZM496.0,83.1L524.2,85.2L535.4,95.0L505.0,92.6ZM515.3,103.6L548.2,106.3L563.3,119.6L527.3,116.3ZM541.5,131.4L581.1,135.3L602.5,154.2L558.5,149.4ZM427.5,-0.1L437.7,0.2L439.4,1.5L429.0,1.2ZM430.5,2.6L441.2,2.9L443.2,4.4L432.2,4.0ZM433.9,5.6L445.2,5.9L447.4,7.5L435.7,7.2ZM437.7,8.9L449.7,9.3L452.2,11.1L439.7,10.7ZM441.9,12.6L454.8,13.1L457.5,15.2L444.3,14.7ZM446.7,16.9L460.5,17.4L463.7,19.8L449.4,19.2ZM452.3,21.7L467.0,22.3L470.7,25.1L455.3,24.4ZM458.6,27.4L474.6,28.0L478.9,31.2L462.2,30.5ZM466.0,33.9L483.5,34.7L488.5,38.5L470.2,37.6ZM474.8,41.6L494.0,42.6L500.0,47.1L479.9,46.1ZM485.4,50.9L506.6,52.1L514.0,57.6L491.5,56.3ZM498.3,62.3L522.2,63.8L531.3,70.7L505.9,69.0ZM514.5,76.6L541.6,78.5L553.4,87.3L524.2,85.2ZM535.4,95.0L566.9,97.4L582.5,109.2L548.2,106.3ZM563.3,119.6L600.8,123.0L622.5,139.3L581.1,135.3ZM436.0,-1.1L446.0,-0.8L447.9,0.5L437.7,0.2ZM439.4,1.5L450.0,1.8L452.1,3.2L441.2,2.9ZM443.2,4.4L454.4,4.7L456.8,6.2L445.2,5.9ZM447.4,7.5L459.3,7.9L462.0,9.7L449.7,9.3ZM452.2,11.1L464.8,11.5L467.8,13.5L454.8,13.1ZM457.5,15.2L471.0,15.6L474.5,17.9L460.5,17.4ZM463.7,19.8L478.2,20.3L482.1,22.9L467.0,22.3ZM470.7,25.1L486.4,25.7L490.9,28.7L474.6,28.0ZM478.9,31.2L495.9,32.0L501.3,35.5L483.5,34.7ZM488.5,38.5L507.2,39.3L513.6,43.6L494.0,42.6ZM500.0,47.1L520.6,48.2L528.4,53.3L506.6,52.1ZM514.0,57.6L537.0,59.0L546.6,65.3L522.2,63.8ZM531.3,70.7L557.4,72.4L569.6,80.4L541.6,78.5ZM553.4,87.3L583.5,89.5L599.5,100.0L566.9,97.4ZM447.9,0.5L458.4,0.7L460.7,2.1L450.0,1.8ZM452.1,3.2L463.1,3.5L465.7,5.0L454.4,4.7ZM456.8,6.2L468.4,6.6L471.3,8.3L459.3,7.9ZM462.0,9.7L474.4,10.0L477.6,11.9L464.8,11.5ZM467.8,13.5L481.1,13.9L484.7,16.1L471.0,15.6ZM474.5,17.9L488.7,18.4L492.9,20.8L478.2,20.3ZM482.1,22.9L497.4,23.5L502.3,26.3L486.4,25.7ZM490.9,28.7L507.6,29.4L513.3,32.7L495.9,32.0ZM501.3,35.5L519.5,36.3L526.2,40.3L507.2,39.3ZM513.6,43.6L533.6,44.6L541.8,49.3L520.6,48.2ZM528.4,53.3L550.7,54.5L560.7,60.3L537.0,59.0ZM546.6,65.3L571.8,66.8L584.3,74.1L557.4,72.4ZM569.6,80.4L598.5,82.4L614.7,91.8L583.5,89.5ZM456.2,-0.6L466.4,-0.3L468.9,1.0L458.4,0.7ZM460.7,2.1L471.5,2.4L474.3,3.8L463.1,3.5ZM465.7,5.0L477.2,5.3L480.2,6.9L468.4,6.6ZM471.3,8.3L483.5,8.6L486.9,10.4L474.4,10.0ZM477.6,11.9L490.6,12.4L494.5,14.4L481.1,13.9ZM484.7,16.1L498.7,16.6L503.1,18.9L488.7,18.4ZM492.9,20.8L507.9,21.4L513.0,24.1L497.4,23.5ZM502.3,26.3L518.6,27.0L524.5,30.1L507.6,29.4ZM513.3,32.7L531.0,33.5L538.0,37.2L519.5,36.3ZM526.2,40.3L545.7,41.2L554.1,45.6L533.6,44.6ZM541.8,49.3L563.4,50.4L573.6,55.8L550.7,54.5ZM560.7,60.3L585.0,61.7L597.7,68.4L571.8,66.8ZM468.9,1.0L479.6,1.3L482.5,2.7L471.5,2.4ZM474.3,3.8L485.6,4.1L488.8,5.7L477.2,5.3ZM480.2,6.9L492.2,7.3L495.9,9.0L483.5,8.6ZM486.9,10.4L499.7,10.8L503.8,12.8L490.6,12.4ZM494.5,14.4L508.2,14.9L512.8,17.1L498.7,16.6ZM503.1,18.9L517.8,19.4L523.2,22.0L507.9,21.4ZM513.0,24.1L528.9,24.7L535.1,27.6L518.6,27.0ZM524.5,30.1L541.8,30.8L549.1,34.3L531.0,33.5ZM538.0,37.2L557.0,38.0L565.6,42.1L545.7,41.2ZM554.1,45.6L575.1,46.6L585.5,51.6L563.4,50.4ZM476.8,-0.0L487.3,0.2L490.4,1.6L479.6,1.3ZM482.5,2.7L493.6,3.0L497.0,4.4L485.6,4.1ZM488.8,5.7L500.6,6.0L504.4,7.6L492.2,7.3ZM495.9,9.0L508.4,9.4L512.7,11.2L499.7,10.8ZM503.8,12.8L517.2,13.2L522.1,15.3L508.2,14.9ZM512.8,17.1L527.2,17.6L532.8,20.0L517.8,19.4ZM523.2,22.0L538.7,22.5L545.1,25.3L528.9,24.7ZM535.1,27.6L552.0,28.3L559.4,31.6L541.8,30.8ZM549.1,34.3L567.5,35.1L576.4,38.9L557.0,38.0ZM565.6,42.1L586.0,43.1L596.6,47.7L575.1,46.6ZM490.4,1.6L501.3,1.8L504.9,3.3L493.6,3.0ZM497.0,4.4L508.6,4.8L512.5,6.3L500.6,6.0ZM504.4,7.6L516.7,8.0L521.1,9.8L508.4,9.4ZM512.7,11.2L525.8,11.6L530.8,13.7L517.2,13.2ZM522.1,15.3L536.2,15.8L541.9,18.1L527.2,17.6ZM532.8,20.0L548.0,20.5L554.5,23.1L538.7,22.5ZM545.1,25.3L561.6,26.0L569.2,29.0L552.0,28.3ZM559.4,31.6L577.4,32.3L586.4,35.9L567.5,35.1ZM498.0,0.5L508.8,0.8L512.4,2.1L501.3,1.8ZM504.9,3.3L516.3,3.6L520.3,5.1L508.6,4.8ZM512.5,6.3L524.7,6.7L529.2,8.4L516.7,8.0ZM521.1,9.8L534.0,10.2L539.2,12.1L525.8,11.6ZM530.8,13.7L544.7,14.1L550.5,16.3L536.2,15.8ZM541.9,18.1L556.7,18.6L563.4,21.1L548.0,20.5ZM554.5,23.1L570.6,23.7L578.3,26.6L561.6,26.0ZM569.2,29.0L586.7,29.7L595.8,33.1L577.4,32.3ZM4683.2,1675.8L6236.4,2126.6L-67587.7,-25272.9L31323.0,12339.2ZM512.4,2.1L523.6,2.4L527.8,3.9L516.3,3.6ZM520.3,5.1L532.3,5.4L536.9,7.0L524.7,6.7ZM529.2,8.4L541.9,8.7L547.2,10.6L534.0,10.2ZM539.2,12.1L552.7,12.5L558.7,14.5L544.7,14.1ZM550.5,16.3L565.1,16.7L571.9,19.1L556.7,18.6ZM563.4,21.1L579.2,21.6L587.0,24.3L570.6,23.7ZM519.7,1.0L530.7,1.3L535.0,2.7L523.6,2.4ZM527.8,3.9L539.5,4.2L544.3,5.7L532.3,5.4ZM536.9,7.0L549.4,7.4L554.8,9.1L541.9,8.7ZM547.2,10.6L560.5,11.0L566.5,12.9L552.7,12.5ZM558.7,14.5L573.0,15.0L579.9,17.2L565.1,16.7ZM571.9,19.1L587.2,19.6L595.2,22.2L579.2,21.6ZM8893.6,2897.8L14480.9,4519.4L-10618.1,-3609.5L-17673.2,-6292.2ZM535.0,2.7L546.5,3.0L551.4,4.5L539.5,4.2ZM544.3,5.7L556.6,6.1L562.0,7.7L549.4,7.4ZM554.8,9.1L567.8,9.5L574.0,11.4L560.5,11.0ZM566.5,12.9L580.5,13.4L587.5,15.5L573.0,15.0ZM541.9,1.6L553.3,1.9L558.2,3.3L546.5,3.0ZM551.4,4.5L563.4,4.8L569.0,6.4L556.6,6.1ZM562.0,7.7L574.8,8.1L581.1,9.9L567.8,9.5ZM33800.2,10126.5L-154346.6,-44479.9L-6285.8,-1962.0L-7801.3,-2538.3ZM558.2,3.3L570.0,3.6L575.6,5.2L563.4,4.8ZM569.0,6.4L581.6,6.8L587.8,8.5L574.8,8.1ZM7652.4,2040.5L10660.0,2745.3L-25278.1,-7020.0L-154346.6,-44479.9ZM564.7,2.2L576.4,2.5L582.0,3.9L570.0,3.6ZM16741.7,4170.6L35536.9,8575.1L-10189.6,-2640.8L-14283.1,-3828.9Z"/>
<path fill="none" stroke="url(#flg)" stroke-width="0.7" d="M-139.7,23.5L-808.2,120.9M-138.5,23.6L-807.1,121.3M-137.4,23.7L-806.1,121.7M-135.0,23.8L-803.9,122.5M-133.8,23.9L-802.8,122.9M-132.6,24.0L-801.7,123.4M-130.2,24.1L-799.5,124.2M-129.0,24.2L-798.4,124.6M-127.8,24.2L-797.3,125.1M-125.4,24.4L-795.0,125.9M-124.2,24.5L-793.9,126.3M-123.0,24.5L-792.7,126.8M-120.6,24.7L-790.4,127.7M-119.3,24.8L-789.2,128.1M-118.1,24.8L-788.1,128.5M-115.7,25.0L-785.7,129.4M-114.4,25.1L-784.5,129.9M-113.2,25.1L-783.4,130.3M-110.7,25.3L-780.9,131.3M-109.5,25.4L-779.7,131.7M-108.2,25.4L-778.5,132.2M-105.7,25.6L-776.1,133.1M-104.5,25.7L-774.8,133.6M-103.2,25.7L-773.6,134.1M-100.7,25.9L-771.1,135.0M-99.4,26.0L-769.8,135.5M-98.2,26.0L-768.5,136.0M-95.6,26.2L-766.0,136.9M-94.4,26.3L-764.7,137.4M-93.1,26.4L-763.4,137.9M-90.5,26.5L-760.8,138.9M-89.2,26.6L-759.5,139.4M-87.9,26.7L-758.1,139.9M-85.4,26.8L-755.5,141.0M-84.1,26.9L-754.1,141.5M-82.8,27.0L-752.7,142.0M-80.1,27.1L-750.0,143.0M-78.8,27.2L-748.6,143.5M-77.5,27.3L-747.2,144.1M-74.9,27.5L-744.4,145.1M-73.6,27.5L-743.0,145.7M-72.2,27.6L-741.6,146.2M-69.6,27.8L-738.7,147.3M-68.2,27.9L-737.3,147.9M-66.9,28.0L-735.9,148.4M-64.2,28.1L-732.9,149.5M-62.9,28.2L-731.4,150.1M-61.5,28.3L-730.0,150.6M-58.8,28.4L-727.0,151.8M-57.5,28.5L-725.4,152.4M-56.1,28.6L-723.9,152.9M-53.4,28.8L-720.9,154.1M-52.0,28.9L-719.3,154.7M-50.6,28.9L-717.7,155.3M-47.9,29.1L-714.6,156.5M-46.5,29.2L-713.0,157.1M-45.1,29.3L-711.4,157.7M-42.3,29.4L-708.2,158.9M-40.9,29.5L-706.6,159.5M-39.5,29.6L-704.9,160.2M-36.7,29.8L-701.6,161.4M-35.3,29.9L-700.0,162.0M-33.9,30.0L-698.3,162.7M-31.0,30.1L-694.9,164.0M-29.6,30.2L-693.2,164.6M-28.2,30.3L-691.5,165.3M-25.3,30.5L-688.0,166.6M-23.9,30.6L-686.3,167.3M-22.5,30.7L-684.5,167.9M-19.6,30.8L-680.9,169.3M-18.1,30.9L-679.1,170.0M-16.7,31.0L-677.3,170.7M-13.7,31.2L-673.7,172.0M-12.3,31.3L-671.8,172.7M-10.8,31.4L-670.0,173.5M-7.9,31.5L-666.2,174.9M-6.4,31.6L-664.3,175.6M-4.9,31.7L-662.4,176.3M-1.9,31.9L-658.6,177.8M-0.4,32.0L-656.6,178.5M1.1,32.1L-654.7,179.3M4.1,32.3L-650.7,180.8M5.6,32.4L-648.7,181.5M7.1,32.5L-646.7,182.3M10.1,32.6L-642.7,183.8M11.6,32.7L-640.6,184.6M13.2,32.8L-638.6,185.4M16.2,33.0L-634.4,187.0M17.8,33.1L-632.3,187.8M19.3,33.2L-630.1,188.6M22.4,33.4L-625.9,190.2M23.9,33.5L-623.7,191.1M25.5,33.6L-621.5,191.9M28.6,33.8L-617.1,193.6M30.2,33.9L-614.9,194.4M31.8,34.0L-612.6,195.3M34.9,34.1L-608.1,197.0M36.5,34.2L-605.8,197.9M38.1,34.3L-603.5,198.7M41.3,34.5L-598.8,200.5M42.9,34.6L-596.4,201.4M44.5,34.7L-594.0,202.3M47.7,34.9L-589.2,204.2M49.3,35.0L-586.8,205.1M50.9,35.1L-584.3,206.0M54.2,35.3L-579.4,207.9M55.8,35.4L-576.9,208.9M57.4,35.5L-574.3,209.8M60.7,35.7L-569.2,211.8M62.4,35.8L-566.6,212.8M64.0,35.9L-564.0,213.7M67.3,36.1L-558.7,215.8M69.0,36.2L-556.1,216.8M70.7,36.3L-553.4,217.8M74.0,36.5L-547.9,219.9M75.7,36.6L-545.2,220.9M77.4,36.7L-542.4,222.0M80.8,36.9L-536.8,224.1M82.5,37.0L-533.9,225.2M84.2,37.1L-531.1,226.3M87.6,37.4L-525.3,228.5M89.3,37.5L-522.3,229.6M91.0,37.6L-519.4,230.7M94.5,37.8L-513.4,233.0M96.2,37.9L-510.3,234.2M98.0,38.0L-507.3,235.3M101.5,38.2L-501.1,237.7M103.2,38.3L-497.9,238.9M105.0,38.4L-494.8,240.1M108.5,38.6L-488.3,242.5M110.3,38.7L-485.1,243.8M112.0,38.8L-481.8,245.0M115.6,39.1L-475.2,247.5M117.4,39.2L-471.8,248.8M119.2,39.3L-468.4,250.1M122.8,39.5L-461.5,252.7M124.6,39.6L-458.0,254.0M126.4,39.7L-454.5,255.4M130.1,39.9L-447.4,258.1M131.9,40.0L-443.8,259.5M133.7,40.2L-440.1,260.9M137.4,40.4L-432.7,263.7M139.2,40.5L-429.0,265.1M141.1,40.6L-425.2,266.5M144.8,40.8L-417.5,269.5M146.7,40.9L-413.6,270.9M148.6,41.1L-409.7,272.4M152.3,41.3L-401.7,275.5M154.2,41.4L-397.7,277.0M156.1,41.5L-393.6,278.6M159.9,41.7L-385.3,281.7M161.8,41.9L-381.1,283.3M163.7,42.0L-376.9,284.9M167.6,42.2L-368.2,288.2M169.5,42.3L-363.9,289.9M171.4,42.5L-359.4,291.5M175.3,42.7L-350.5,295.0M177.3,42.8L-345.9,296.7M179.2,42.9L-341.3,298.4M183.1,43.2L-332.0,302.0M185.1,43.3L-327.2,303.8M187.1,43.4L-322.4,305.6M191.1,43.6L-312.7,309.3M193.1,43.8L-307.7,311.2M195.1,43.9L-302.7,313.1M199.1,44.1L-292.6,317.0M201.1,44.3L-287.4,318.9M203.1,44.4L-282.2,320.9M207.2,44.6L-271.5,325.0M209.2,44.8L-266.1,327.0M211.3,44.9L-260.7,329.1M215.4,45.1L-249.6,333.3M217.4,45.3L-243.9,335.5M219.5,45.4L-238.2,337.6M223.7,45.6L-226.6,342.1M225.8,45.8L-220.6,344.3M227.8,45.9L-214.7,346.6M232.0,46.1L-202.5,351.2M234.2,46.3L-196.3,353.6M236.3,46.4L-190.0,356.0M240.5,46.7L-177.2,360.8M242.7,46.8L-170.7,363.3M244.8,46.9L-164.1,365.8M249.1,47.2L-150.7,370.9M251.3,47.3L-143.9,373.5M253.4,47.4L-136.9,376.1M257.8,47.7L-122.8,381.5M260.0,47.8L-115.6,384.2M262.2,48.0L-108.4,387.0M266.6,48.2L-93.5,392.7M268.8,48.4L-85.9,395.6M271.0,48.5L-78.2,398.5M275.4,48.8L-62.6,404.4M277.7,48.9L-54.6,407.5M279.9,49.1L-46.5,410.5M284.4,49.3L-29.9,416.8M286.7,49.5L-21.5,420.0M289.0,49.6L-12.9,423.3M293.5,49.9L4.6,430.0M295.8,50.0L13.5,433.3M298.1,50.2L22.5,436.8M302.7,50.4L41.1,443.8M305.0,50.6L50.5,447.4M307.4,50.7L60.1,451.1M312.0,51.0L79.8,458.6M314.4,51.1L89.8,462.4M316.7,51.3L100.0,466.3M321.5,51.6L120.9,474.2M323.8,51.7L131.6,478.3M326.2,51.9L142.5,482.4M331.0,52.2L164.7,490.9M333.4,52.3L176.1,495.2M335.8,52.5L187.7,499.6M340.7,52.7L211.4,508.6M343.1,52.9L223.6,513.2M345.5,53.0L235.9,517.9M350.4,53.3L261.3,527.6M352.9,53.5L274.3,532.5M355.4,53.6L287.6,537.6M360.3,53.9L314.8,547.9M362.8,54.1L328.7,553.2M365.3,54.2L342.9,558.6M370.4,54.6L372.2,569.7M372.9,54.7L387.2,575.5M375.4,54.9L402.5,581.3M380.5,55.2L434.0,593.2M383.1,55.3L450.2,599.4M385.6,55.5L466.7,605.7M390.8,55.8L500.7,618.6M393.4,56.0L518.2,625.3M396.0,56.1L536.1,632.1M401.2,56.4L573.0,646.1M403.8,56.6L592.0,653.3M406.5,56.8L611.4,660.7M411.8,57.1L651.5,676.0M414.4,57.2L672.2,683.8M417.1,57.4L693.4,691.9M422.4,57.7L737.1,708.5M425.1,57.9L759.8,717.1M427.8,58.1L782.9,725.9M433.3,58.4L830.9,744.2M436.0,58.5L855.7,753.6M438.7,58.7L881.2,763.3M444.2,59.0L934.0,783.4M447.0,59.2L961.4,793.8M449.8,59.4L989.5,804.5M455.3,59.7L1047.9,826.7M458.1,59.9L1078.2,838.2M460.9,60.1L1109.4,850.1M466.6,60.4L1174.3,874.8M469.4,60.6L1208.2,887.6M472.3,60.8L1243.0,900.9M478.0,61.1L1315.6,928.5M480.9,61.3L1353.6,942.9M483.8,61.5L1392.7,957.8M489.6,61.8L1474.5,988.9M492.5,62.0L1517.3,1005.2M495.4,62.2L1561.5,1022.0M501.3,62.5L1654.4,1057.3M504.2,62.7L1703.1,1075.9M507.2,62.9L1753.6,1095.0M513.1,63.2L1859.8,1135.4M516.1,63.4L1915.8,1156.7M519.1,63.6L1973.8,1178.8M525.2,64.0L2096.6,1225.5M528.2,64.2L2161.5,1250.2M531.3,64.3L2229.1,1275.9M537.4,64.7L2372.6,1330.4M540.5,64.9L2448.8,1359.4M543.5,65.1L2528.4,1389.7M549.8,65.5L2698.3,1454.3M552.9,65.7L2789.1,1488.8M556.0,65.8L2884.2,1525.0M562.3,66.2L3088.6,1602.7M565.5,66.4L3198.5,1644.5M568.6,66.6L3314.2,1688.5M575.0,67.0L3564.7,1783.8M578.2,67.2L3700.6,1835.4M581.5,67.4L3844.4,1890.1M587.9,67.8L4158.6,2009.6M591.2,68.0L4330.7,2075.0M594.5,68.2L4514.2,2144.8M601.0,68.6L4919.9,2299.1M604.3,68.8L5145.0,2384.7M607.6,69.0L5387.2,2476.8M614.3,69.4L5931.2,2683.6M617.7,69.6L6238.1,2800.3M621.0,69.8L6572.4,2927.5M627.8,70.2L7339.7,3219.2M631.2,70.4L7782.7,3387.7M634.6,70.6L8274.0,3574.5M641.4,71.0L9436.7,4016.6M644.9,71.3L10131.5,4280.9M648.4,71.5L10923.1,4581.9M655.3,71.9L12890.3,5329.9M658.8,72.1L14133.5,5802.7M662.3,72.3L15616.6,6366.6M669.4,72.7L19646.3,7899.0M672.9,73.0L22481.8,8977.2M676.5,73.2L26208.0,10394.2M683.7,73.6L38781.0,15175.2M687.3,73.8L50670.1,19696.2M690.9,74.1L72608.0,28038.4M698.2,74.5L475887.2,181390.6M701.8,74.7L-276964.3,-104891.1M705.5,74.9L-108197.9,-40715.4M712.9,75.4L-49329.1,-18329.8M716.6,75.6L-38951.2,-14383.5M720.4,75.8L-32257.5,-11838.1M727.9,76.3L-24131.2,-8748.0M731.6,76.5L-21479.8,-7739.8M735.4,76.8L-19379.0,-6940.9M743.0,77.2L-16260.7,-5755.1M746.9,77.5L-15071.8,-5303.0M750.7,77.7L-14057.3,-4917.2M758.4,78.2L-12417.6,-4293.7M762.3,78.4L-11745.7,-4038.2M766.2,78.6L-11149.9,-3811.7M774.1,79.1L-10140.5,-3427.8M778.1,79.4L-9709.1,-3263.8M782.0,79.6L-9317.7,-3114.9M790.0,80.1L-8634.1,-2855.0M794.0,80.3L-8334.0,-2740.9M798.1,80.6L-8057.3,-2635.7M806.2,81.1L-7563.9,-2448.0M810.2,81.3L-7343.0,-2364.1M814.3,81.6L-7137.1,-2285.8M822.6,82.1L-6764.3,-2144.0M826.7,82.3L-6595.0,-2079.6M830.9,82.6L-6435.8,-2019.1M839.3,83.1L-6144.2,-1908.2M843.5,83.3L-6010.4,-1857.3M847.7,83.6L-5883.6,-1809.1M856.2,84.1L-5649.3,-1720.0M860.5,84.4L-5540.8,-1678.7M864.8,84.6L-5437.5,-1639.5M873.4,85.2L-5245.1,-1566.3M877.8,85.4L-5155.4,-1532.2M882.2,85.7L-5069.6,-1499.6M891.0,86.2L-4908.8,-1438.4M895.4,86.5L-4833.4,-1409.7M899.8,86.8L-4761.0,-1382.2M908.8,87.3L-4624.6,-1330.4M913.3,87.6L-4560.3,-1305.9M917.8,87.9L-4498.4,-1282.4M926.9,88.4L-4381.3,-1237.8M931.5,88.7L-4325.8,-1216.7M936.1,89.0L-4272.3,-1196.4M-143.2,23.8L945.7,90.5M-145.5,24.1L950.9,91.8M-147.8,24.4L956.1,93.0M-152.5,25.1L966.9,95.7M-154.8,25.5L972.4,97.0M-157.2,25.8L978.1,98.4M-162.1,26.5L989.7,101.3M-164.6,26.9L995.6,102.7M-167.1,27.2L1001.7,104.2M-172.1,28.0L1014.2,107.3M-174.7,28.4L1020.7,108.9M-177.3,28.7L1027.3,110.5M-182.5,29.5L1040.8,113.8M-185.2,29.9L1047.8,115.5M-187.8,30.3L1055.0,117.3M-193.3,31.1L1069.7,120.9M-196.0,31.5L1077.4,122.8M-198.8,31.9L1085.1,124.7M-204.5,32.7L1101.2,128.6M-207.4,33.1L1109.6,130.7M-210.3,33.5L1118.1,132.8M-216.2,34.4L1135.7,137.1M-219.2,34.8L1144.9,139.3M-222.2,35.3L1154.2,141.6M-228.3,36.1L1173.6,146.4M-231.5,36.6L1183.7,148.9M-234.6,37.1L1194.0,151.4M-241.0,38.0L1215.4,156.6M-244.3,38.5L1226.6,159.4M-247.5,38.9L1238.0,162.2M-254.2,39.9L1261.9,168.0M-257.6,40.4L1274.3,171.1M-261.1,40.9L1287.0,174.2M-268.0,41.9L1313.7,180.7M-271.6,42.4L1327.6,184.2M-275.2,42.9L1341.9,187.7M-282.5,44.0L1371.9,195.0M-286.2,44.5L1387.6,198.9M-289.9,45.1L1403.8,202.8M-297.6,46.2L1437.7,211.2M-301.5,46.8L1455.6,215.5M-305.4,47.3L1474.0,220.1M-313.4,48.5L1512.9,229.6M-317.5,49.1L1533.3,234.6M-321.6,49.7L1554.5,239.8M-330.0,50.9L1599.4,250.8M-334.2,51.5L1623.1,256.6M-338.6,52.1L1647.7,262.7M-347.4,53.4L1700.0,275.5M-351.9,54.1L1727.8,282.3M-356.4,54.7L1756.8,289.4M-365.7,56.1L1818.7,304.6M-370.4,56.8L1851.7,312.7M-375.2,57.5L1886.3,321.2M-384.9,58.9L1960.5,339.4M-389.9,59.6L2000.4,349.2M-394.9,60.3L2042.4,359.5M-405.2,61.8L2133.2,381.8M-410.5,62.6L2182.4,393.8M-415.8,63.4L2234.4,406.6M-426.6,64.9L2347.9,434.4M-432.2,65.7L2410.0,449.7M-437.8,66.5L2476.1,465.9M-449.2,68.2L2622.2,501.7M-455.1,69.1L2703.0,521.5M-461.0,69.9L2789.9,542.8M-473.2,71.7L2984.7,590.6M-479.4,72.6L3094.4,617.5M-485.7,73.5L3213.6,646.8M-498.6,75.4L3486.4,713.7M-505.2,76.3L3643.4,752.2M-511.9,77.3L3817.1,794.8M-525.5,79.3L4226.3,895.2M-532.5,80.3L4469.6,954.8M-539.7,81.3L4745.8,1022.6M-554.2,83.5L5427.0,1189.7M-561.7,84.5L5853.8,1294.4M-569.3,85.6L6359.3,1418.4M-584.8,87.9L7713.2,1750.4M-592.8,89.1L8649.0,1980.0M-600.9,90.2L9858.0,2276.5M-617.5,92.6L13772.7,3236.7M-626.0,93.9L17256.2,4091.2M-634.7,95.1L23186.6,5545.8M-652.5,97.7L77034.6,18753.7M-661.7,99.1L-425492.7,-104507.2M-671.0,100.4L-55999.2,-13877.1M-690.1,103.2L-20238.3,-5105.6M-699.9,104.6L-15275.5,-3888.3M-709.9,106.1L-12239.0,-3143.5M-730.5,109.1L-8713.3,-2278.7M-741.1,110.6L-7599.1,-2005.4M-751.9,112.2L-6728.4,-1791.8M-774.2,115.4L-5455.5,-1479.6M-785.7,117.1L-4976.1,-1362.0M-797.3,118.8L-4569.6,-1262.3"/>
<path fill="none" stroke="url(#hlg)" stroke-width="1.0" d="M-136.2,23.7L-805.0,122.1M-126.6,24.3L-796.1,125.5M-116.9,24.9L-786.9,129.0M-107.0,25.5L-777.3,132.6M-96.9,26.1L-767.3,136.5M-86.7,26.8L-756.8,140.4M-76.2,27.4L-745.8,144.6M-65.6,28.0L-734.4,149.0M-54.7,28.7L-722.4,153.5M-43.7,29.4L-709.8,158.3M-32.5,30.0L-696.6,163.3M-21.0,30.7L-682.7,168.6M-9.3,31.5L-668.1,174.2M2.6,32.2L-652.7,180.0M14.7,32.9L-636.5,186.2M27.1,33.7L-619.3,192.7M39.7,34.4L-601.1,199.6M52.5,35.2L-581.9,207.0M65.7,36.0L-561.4,214.7M79.1,36.8L-539.6,223.0M92.8,37.7L-516.4,231.9M106.7,38.5L-491.6,241.3M121.0,39.4L-465.0,251.4M135.6,40.3L-436.4,262.3M150.4,41.2L-405.7,273.9M165.6,42.1L-372.6,286.5M181.2,43.0L-336.7,300.2M197.1,44.0L-297.7,315.0M213.3,45.0L-255.1,331.2M229.9,46.0L-208.6,348.9M246.9,47.0L-157.5,368.3M264.4,48.1L-101.0,389.8M282.2,49.2L-38.3,413.7M300.4,50.3L31.7,440.3M319.1,51.4L110.4,470.2M338.2,52.6L199.4,504.1M357.9,53.8L301.0,542.7M378.0,55.0L418.1,587.2M398.6,56.3L554.3,639.0M419.8,57.6L715.0,700.1M441.5,58.9L907.3,773.2M463.8,60.2L1141.4,862.3M486.6,61.6L1432.9,973.1M510.2,63.1L1805.7,1114.9M534.3,64.5L2299.4,1302.6M559.2,66.0L2983.9,1562.9M584.7,67.6L3996.8,1948.0M611.0,69.2L5648.4,2576.1M638.0,70.8L8821.9,3782.9M665.9,72.5L17416.3,7051.0M694.5,74.3L126660.3,48592.5M724.1,76.1L-27581.8,-10060.1M754.6,77.9L-13181.4,-4584.2M786.0,79.8L-8960.8,-2979.2M818.5,81.8L-6944.6,-2212.6M852.0,83.9L-5763.4,-1763.4M886.6,86.0L-4987.5,-1468.3M922.3,88.1L-4438.8,-1259.7M-150.1,24.8L961.5,94.3M-169.6,27.6L1007.9,105.7M-190.5,30.7L1062.3,119.1M-213.2,33.9L1126.8,134.9M-237.8,37.5L1204.6,154.0M-264.5,41.4L1300.2,177.4M-293.7,45.6L1420.5,206.9M-325.7,50.3L1576.5,245.2M-361.0,55.4L1787.1,296.9M-400.0,61.1L2086.6,370.3M-443.5,67.4L2546.7,483.2M-492.1,74.4L3343.8,678.7M-546.9,82.4L5061.8,1100.1M-609.1,91.4L11480.6,2674.5M-680.4,101.8L-29812.1,-7453.9M-763.0,113.8L-6029.2,-1620.3"/>
<path fill="none" stroke="url(#lg)" stroke-width="0.9" d="M-64.0,12.3L-809.3,120.5M-55.4,12.7L-800.6,123.8M-46.7,13.1L-791.6,127.2M-37.8,13.5L-782.2,130.8M-28.8,14.0L-772.3,134.5M-19.7,14.4L-762.1,138.4M-10.4,14.8L-751.4,142.5M-1.0,15.3L-740.2,146.8M8.5,15.7L-728.5,151.2M18.2,16.2L-716.2,155.9M28.1,16.7L-703.3,160.8M38.1,17.1L-689.8,165.9M48.3,17.6L-675.5,171.3M58.6,18.1L-660.5,177.1M69.1,18.6L-644.7,183.1M79.8,19.1L-628.0,189.4M90.7,19.6L-610.3,196.1M101.7,20.1L-591.6,203.2M112.9,20.7L-571.8,210.8M124.3,21.2L-550.7,218.8M135.9,21.8L-528.2,227.4M147.7,22.3L-504.2,236.5M159.7,22.9L-478.5,246.3M171.9,23.5L-451.0,256.7M184.3,24.1L-421.4,268.0M197.0,24.7L-389.5,280.1M209.8,25.3L-355.0,293.2M222.9,25.9L-317.6,307.5M236.3,26.5L-276.9,322.9M249.9,27.2L-232.4,339.8M263.7,27.8L-183.7,358.4M277.8,28.5L-129.9,378.8M292.2,29.2L-70.5,401.4M306.8,29.9L-4.3,426.6M321.7,30.6L69.9,454.8M337.0,31.3L153.5,486.6M352.5,32.0L248.5,522.7M368.3,32.8L357.4,564.1M384.4,33.5L483.5,612.1M400.9,34.3L631.2,668.3M417.7,35.1L806.6,735.0M434.9,35.9L1018.3,815.4M452.4,36.8L1278.8,914.5M470.2,37.6L1607.2,1039.4M488.5,38.5L2034.1,1201.7M507.2,39.3L2611.5,1421.3M526.2,40.3L3436.1,1734.9M545.7,41.2L4710.1,2219.3M565.6,42.1L6938.1,3066.5M586.0,43.1L11833.1,4927.9M606.8,44.1L31323.0,12339.2M628.1,45.1L-67587.7,-25272.9M649.9,46.1L-17673.2,-6292.2M672.3,47.2L-10618.1,-3609.5M695.1,48.3L-7801.3,-2538.3M718.5,49.4L-6285.8,-1962.0M742.5,50.5L-5339.1,-1602.0M767.1,51.7L-4691.5,-1355.8M792.3,52.9L-4220.6,-1176.7M-64.0,12.3L792.3,52.9M-77.5,14.2L815.5,58.5M-91.8,16.3L841.3,64.9M-107.1,18.5L870.4,72.0M-123.4,20.9L903.2,80.1M-140.9,23.4L940.7,89.3M-159.7,26.2L983.8,99.8M-179.9,29.1L1034.0,112.1M-201.7,32.3L1093.1,126.6M-225.2,35.7L1163.8,144.0M-250.9,39.4L1249.8,165.1M-278.8,43.5L1356.7,191.3M-309.4,47.9L1493.1,224.8M-342.9,52.8L1673.4,269.0M-380.0,58.2L1922.5,330.1M-421.2,64.1L2289.5,420.1M-467.1,70.8L2883.6,565.8M-518.6,78.3L4010.2,842.2M-577.0,86.8L6967.5,1567.5M-643.5,96.4L35536.9,8575.1M-720.1,107.5L-10189.6,-2640.8M-809.3,120.5L-4220.6,-1176.7"/>
<path fill="#000" fill-opacity="0.24" d="M32.8,132.3a0.7,0.6 0 1,0 1.4,0a0.7,0.6 0 1,0 -1.4,0M36.7,132.8a0.7,0.6 0 1,0 1.4,0a0.7,0.6 0 1,0 -1.4,0M28.6,134.6a0.7,0.6 0 1,0 1.4,0a0.7,0.6 0 1,0 -1.4,0M32.5,135.1a0.7,0.6 0 1,0 1.4,0a0.7,0.6 0 1,0 -1.4,0M86.8,120.5a0.7,0.6 0 1,0 1.4,0a0.7,0.6 0 1,0 -1.4,0M90.6,121.0a0.7,0.6 0 1,0 1.4,0a0.7,0.6 0 1,0 -1.4,0M83.4,122.5a0.7,0.6 0 1,0 1.4,0a0.7,0.6 0 1,0 -1.4,0M87.2,123.0a0.7,0.6 0 1,0 1.4,0a0.7,0.6 0 1,0 -1.4,0M29.8,154.9a0.8,0.6 0 1,0 1.6,0a0.8,0.6 0 1,0 -1.6,0M34.2,155.6a0.8,0.6 0 1,0 1.6,0a0.8,0.6 0 1,0 -1.6,0M25.0,157.9a0.8,0.6 0 1,0 1.6,0a0.8,0.6 0 1,0 -1.6,0M29.4,158.6a0.8,0.6 0 1,0 1.6,0a0.8,0.6 0 1,0 -1.6,0M134.3,110.1a0.7,0.5 0 1,0 1.4,0a0.7,0.5 0 1,0 -1.4,0M138.0,110.5a0.7,0.5 0 1,0 1.4,0a0.7,0.5 0 1,0 -1.4,0M131.7,111.9a0.7,0.5 0 1,0 1.4,0a0.7,0.5 0 1,0 -1.4,0M135.4,112.3a0.7,0.5 0 1,0 1.4,0a0.7,0.5 0 1,0 -1.4,0M90.3,140.2a0.8,0.6 0 1,0 1.6,0a0.8,0.6 0 1,0 -1.6,0M94.5,140.8a0.8,0.6 0 1,0 1.6,0a0.8,0.6 0 1,0 -1.6,0M86.6,142.7a0.8,0.6 0 1,0 1.6,0a0.8,0.6 0 1,0 -1.6,0M90.8,143.3a0.8,0.6 0 1,0 1.6,0a0.8,0.6 0 1,0 -1.6,0M26.0,184.1a0.9,0.7 0 1,0 1.8,0a0.9,0.7 0 1,0 -1.8,0M30.9,185.0a0.9,0.7 0 1,0 1.8,0a0.9,0.7 0 1,0 -1.8,0M20.4,187.9a0.9,0.7 0 1,0 1.8,0a0.9,0.7 0 1,0 -1.8,0M25.4,188.9a0.9,0.7 0 1,0 1.8,0a0.9,0.7 0 1,0 -1.8,0M142.7,127.4a0.8,0.6 0 1,0 1.5,0a0.8,0.6 0 1,0 -1.5,0M146.8,127.9a0.8,0.6 0 1,0 1.5,0a0.8,0.6 0 1,0 -1.5,0M139.9,129.6a0.8,0.6 0 1,0 1.5,0a0.8,0.6 0 1,0 -1.5,0M144.0,130.1a0.8,0.6 0 1,0 1.5,0a0.8,0.6 0 1,0 -1.5,0M94.6,165.1a0.9,0.7 0 1,0 1.8,0a0.9,0.7 0 1,0 -1.8,0M99.4,165.8a0.9,0.7 0 1,0 1.8,0a0.9,0.7 0 1,0 -1.8,0M90.5,168.3a0.9,0.7 0 1,0 1.8,0a0.9,0.7 0 1,0 -1.8,0M95.4,169.1a0.9,0.7 0 1,0 1.8,0a0.9,0.7 0 1,0 -1.8,0M20.8,223.0a1.1,0.9 0 1,0 2.1,0a1.1,0.9 0 1,0 -2.1,0M26.6,224.2a1.1,0.9 0 1,0 2.1,0a1.1,0.9 0 1,0 -2.1,0M14.2,228.2a1.1,0.9 0 1,0 2.1,0a1.1,0.9 0 1,0 -2.1,0M20.0,229.5a1.1,0.9 0 1,0 2.1,0a1.1,0.9 0 1,0 -2.1,0M188.6,116.2a0.7,0.6 0 1,0 1.5,0a0.7,0.6 0 1,0 -1.5,0M192.6,116.6a0.7,0.6 0 1,0 1.5,0a0.7,0.6 0 1,0 -1.5,0M186.5,118.1a0.7,0.6 0 1,0 1.5,0a0.7,0.6 0 1,0 -1.5,0M190.5,118.6a0.7,0.6 0 1,0 1.5,0a0.7,0.6 0 1,0 -1.5,0M153.1,148.9a0.9,0.7 0 1,0 1.7,0a0.9,0.7 0 1,0 -1.7,0M157.7,149.5a0.9,0.7 0 1,0 1.7,0a0.9,0.7 0 1,0 -1.7,0M150.1,151.6a0.9,0.7 0 1,0 1.7,0a0.9,0.7 0 1,0 -1.7,0M154.8,152.3a0.9,0.7 0 1,0 1.7,0a0.9,0.7 0 1,0 -1.7,0M100.3,197.5a1.0,0.8 0 1,0 2.1,0a1.0,0.8 0 1,0 -2.1,0M105.9,198.5a1.0,0.8 0 1,0 2.1,0a1.0,0.8 0 1,0 -2.1,0M95.7,201.8a1.0,0.8 0 1,0 2.1,0a1.0,0.8 0 1,0 -2.1,0M101.3,202.8a1.0,0.8 0 1,0 2.1,0a1.0,0.8 0 1,0 -2.1,0M229.2,106.3a0.7,0.6 0 1,0 1.4,0a0.7,0.6 0 1,0 -1.4,0M233.0,106.7a0.7,0.6 0 1,0 1.4,0a0.7,0.6 0 1,0 -1.4,0M227.6,108.0a0.7,0.6 0 1,0 1.4,0a0.7,0.6 0 1,0 -1.4,0M231.5,108.4a0.7,0.6 0 1,0 1.4,0a0.7,0.6 0 1,0 -1.4,0M203.5,134.9a0.8,0.7 0 1,0 1.7,0a0.8,0.7 0 1,0 -1.7,0M208.0,135.5a0.8,0.7 0 1,0 1.7,0a0.8,0.7 0 1,0 -1.7,0M201.4,137.3a0.8,0.7 0 1,0 1.7,0a0.8,0.7 0 1,0 -1.7,0M205.9,137.9a0.8,0.7 0 1,0 1.7,0a0.8,0.7 0 1,0 -1.7,0M166.4,176.3a1.0,0.8 0 1,0 2.0,0a1.0,0.8 0 1,0 -2.0,0M171.7,177.1a1.0,0.8 0 1,0 2.0,0a1.0,0.8 0 1,0 -2.0,0M163.2,179.9a1.0,0.8 0 1,0 2.0,0a1.0,0.8 0 1,0 -2.0,0M168.6,180.7a1.0,0.8 0 1,0 2.0,0a1.0,0.8 0 1,0 -2.0,0M108.1,241.4a1.2,1.0 0 1,0 2.5,0a1.2,1.0 0 1,0 -2.5,0M114.6,242.8a1.2,1.0 0 1,0 2.5,0a1.2,1.0 0 1,0 -2.5,0M102.7,247.4a1.2,1.0 0 1,0 2.5,0a1.2,1.0 0 1,0 -2.5,0M109.4,248.8a1.2,1.0 0 1,0 2.5,0a1.2,1.0 0 1,0 -2.5,0M265.2,97.5a0.7,0.6 0 1,0 1.4,0a0.7,0.6 0 1,0 -1.4,0M268.9,97.8a0.7,0.6 0 1,0 1.4,0a0.7,0.6 0 1,0 -1.4,0M264.2,99.0a0.7,0.6 0 1,0 1.4,0a0.7,0.6 0 1,0 -1.4,0M267.9,99.4a0.7,0.6 0 1,0 1.4,0a0.7,0.6 0 1,0 -1.4,0M247.4,122.8a0.8,0.6 0 1,0 1.6,0a0.8,0.6 0 1,0 -1.6,0M251.7,123.2a0.8,0.6 0 1,0 1.6,0a0.8,0.6 0 1,0 -1.6,0M245.9,124.9a0.8,0.6 0 1,0 1.6,0a0.8,0.6 0 1,0 -1.6,0M250.3,125.3a0.8,0.6 0 1,0 1.6,0a0.8,0.6 0 1,0 -1.6,0M222.2,158.4a1.0,0.8 0 1,0 1.9,0a1.0,0.8 0 1,0 -1.9,0M227.3,159.1a1.0,0.8 0 1,0 1.9,0a1.0,0.8 0 1,0 -1.9,0M220.0,161.5a1.0,0.8 0 1,0 1.9,0a1.0,0.8 0 1,0 -1.9,0M225.2,162.2a1.0,0.8 0 1,0 1.9,0a1.0,0.8 0 1,0 -1.9,0M184.0,212.5a1.2,0.9 0 1,0 2.3,0a1.2,0.9 0 1,0 -2.3,0M190.2,213.6a1.2,0.9 0 1,0 2.3,0a1.2,0.9 0 1,0 -2.3,0M180.6,217.4a1.2,0.9 0 1,0 2.3,0a1.2,0.9 0 1,0 -2.3,0M186.9,218.5a1.2,0.9 0 1,0 2.3,0a1.2,0.9 0 1,0 -2.3,0M285.9,112.1a0.8,0.6 0 1,0 1.5,0a0.8,0.6 0 1,0 -1.5,0M290.1,112.5a0.8,0.6 0 1,0 1.5,0a0.8,0.6 0 1,0 -1.5,0M285.0,113.9a0.8,0.6 0 1,0 1.5,0a0.8,0.6 0 1,0 -1.5,0M289.2,114.4a0.8,0.6 0 1,0 1.5,0a0.8,0.6 0 1,0 -1.5,0M269.9,143.1a0.9,0.7 0 1,0 1.8,0a0.9,0.7 0 1,0 -1.8,0M274.8,143.7a0.9,0.7 0 1,0 1.8,0a0.9,0.7 0 1,0 -1.8,0M268.6,145.7a0.9,0.7 0 1,0 1.8,0a0.9,0.7 0 1,0 -1.8,0M273.5,146.4a0.9,0.7 0 1,0 1.8,0a0.9,0.7 0 1,0 -1.8,0M246.3,188.8a1.1,0.9 0 1,0 2.2,0a1.1,0.9 0 1,0 -2.2,0M252.3,189.7a1.1,0.9 0 1,0 2.2,0a1.1,0.9 0 1,0 -2.2,0M244.3,192.8a1.1,0.9 0 1,0 2.2,0a1.1,0.9 0 1,0 -2.2,0M250.3,193.8a1.1,0.9 0 1,0 2.2,0a1.1,0.9 0 1,0 -2.2,0M208.3,262.6a1.4,1.1 0 1,0 2.8,0a1.4,1.1 0 1,0 -2.8,0M215.9,264.2a1.4,1.1 0 1,0 2.8,0a1.4,1.1 0 1,0 -2.8,0M204.7,269.5a1.4,1.1 0 1,0 2.8,0a1.4,1.1 0 1,0 -2.8,0M212.5,271.2a1.4,1.1 0 1,0 2.8,0a1.4,1.1 0 1,0 -2.8,0M320.1,102.6a0.7,0.6 0 1,0 1.5,0a0.7,0.6 0 1,0 -1.5,0M324.1,103.0a0.7,0.6 0 1,0 1.5,0a0.7,0.6 0 1,0 -1.5,0M319.5,104.3a0.7,0.6 0 1,0 1.5,0a0.7,0.6 0 1,0 -1.5,0M323.6,104.6a0.7,0.6 0 1,0 1.5,0a0.7,0.6 0 1,0 -1.5,0M311.2,129.9a0.9,0.7 0 1,0 1.7,0a0.9,0.7 0 1,0 -1.7,0M315.9,130.4a0.9,0.7 0 1,0 1.7,0a0.9,0.7 0 1,0 -1.7,0M310.5,132.2a0.9,0.7 0 1,0 1.7,0a0.9,0.7 0 1,0 -1.7,0M315.2,132.7a0.9,0.7 0 1,0 1.7,0a0.9,0.7 0 1,0 -1.7,0M298.5,168.9a1.1,0.8 0 1,0 2.1,0a1.1,0.8 0 1,0 -2.1,0M304.1,169.7a1.1,0.8 0 1,0 2.1,0a1.1,0.8 0 1,0 -2.1,0M297.4,172.3a1.1,0.8 0 1,0 2.1,0a1.1,0.8 0 1,0 -2.1,0M303.1,173.1a1.1,0.8 0 1,0 2.1,0a1.1,0.8 0 1,0 -2.1,0M278.8,229.6a1.3,1.1 0 1,0 2.7,0a1.3,1.1 0 1,0 -2.7,0M285.9,230.8a1.3,1.1 0 1,0 2.7,0a1.3,1.1 0 1,0 -2.7,0M277.0,235.1a1.3,1.1 0 1,0 2.7,0a1.3,1.1 0 1,0 -2.7,0M284.2,236.4a1.3,1.1 0 1,0 2.7,0a1.3,1.1 0 1,0 -2.7,0M350.5,94.2a0.7,0.6 0 1,0 1.4,0a0.7,0.6 0 1,0 -1.4,0M354.4,94.5a0.7,0.6 0 1,0 1.4,0a0.7,0.6 0 1,0 -1.4,0M350.3,95.7a0.7,0.6 0 1,0 1.4,0a0.7,0.6 0 1,0 -1.4,0M354.2,96.0a0.7,0.6 0 1,0 1.4,0a0.7,0.6 0 1,0 -1.4,0M347.3,118.3a0.8,0.7 0 1,0 1.7,0a0.8,0.7 0 1,0 -1.7,0M351.7,118.8a0.8,0.7 0 1,0 1.7,0a0.8,0.7 0 1,0 -1.7,0M347.0,120.3a0.8,0.7 0 1,0 1.7,0a0.8,0.7 0 1,0 -1.7,0M351.5,120.8a0.8,0.7 0 1,0 1.7,0a0.8,0.7 0 1,0 -1.7,0M342.7,152.1a1.0,0.8 0 1,0 2.0,0a1.0,0.8 0 1,0 -2.0,0M348.1,152.8a1.0,0.8 0 1,0 2.0,0a1.0,0.8 0 1,0 -2.0,0M342.3,155.0a1.0,0.8 0 1,0 2.0,0a1.0,0.8 0 1,0 -2.0,0M347.8,155.7a1.0,0.8 0 1,0 2.0,0a1.0,0.8 0 1,0 -2.0,0M335.9,202.8a1.3,1.0 0 1,0 2.5,0a1.3,1.0 0 1,0 -2.5,0M342.6,203.8a1.3,1.0 0 1,0 2.5,0a1.3,1.0 0 1,0 -2.5,0M335.3,207.3a1.3,1.0 0 1,0 2.5,0a1.3,1.0 0 1,0 -2.5,0M342.1,208.4a1.3,1.0 0 1,0 2.5,0a1.3,1.0 0 1,0 -2.5,0M377.8,86.6a0.7,0.6 0 1,0 1.4,0a0.7,0.6 0 1,0 -1.4,0M381.5,86.9a0.7,0.6 0 1,0 1.4,0a0.7,0.6 0 1,0 -1.4,0M377.9,87.9a0.7,0.6 0 1,0 1.4,0a0.7,0.6 0 1,0 -1.4,0M381.7,88.2a0.7,0.6 0 1,0 1.4,0a0.7,0.6 0 1,0 -1.4,0M379.0,108.1a0.8,0.6 0 1,0 1.6,0a0.8,0.6 0 1,0 -1.6,0M383.3,108.5a0.8,0.6 0 1,0 1.6,0a0.8,0.6 0 1,0 -1.6,0M379.2,109.9a0.8,0.6 0 1,0 1.6,0a0.8,0.6 0 1,0 -1.6,0M383.5,110.3a0.8,0.6 0 1,0 1.6,0a0.8,0.6 0 1,0 -1.6,0M380.7,137.7a1.0,0.8 0 1,0 1.9,0a1.0,0.8 0 1,0 -1.9,0M385.8,138.2a1.0,0.8 0 1,0 1.9,0a1.0,0.8 0 1,0 -1.9,0M380.9,140.1a1.0,0.8 0 1,0 1.9,0a1.0,0.8 0 1,0 -1.9,0M386.0,140.7a1.0,0.8 0 1,0 1.9,0a1.0,0.8 0 1,0 -1.9,0M383.2,180.6a1.2,0.9 0 1,0 2.4,0a1.2,0.9 0 1,0 -2.4,0M389.4,181.5a1.2,0.9 0 1,0 2.4,0a1.2,0.9 0 1,0 -2.4,0M383.4,184.4a1.2,0.9 0 1,0 2.4,0a1.2,0.9 0 1,0 -2.4,0M389.8,185.3a1.2,0.9 0 1,0 2.4,0a1.2,0.9 0 1,0 -2.4,0M387.0,249.0a1.5,1.2 0 1,0 3.1,0a1.5,1.2 0 1,0 -3.1,0M395.2,250.5a1.5,1.2 0 1,0 3.1,0a1.5,1.2 0 1,0 -3.1,0M387.4,255.4a1.5,1.2 0 1,0 3.1,0a1.5,1.2 0 1,0 -3.1,0M395.8,256.9a1.5,1.2 0 1,0 3.1,0a1.5,1.2 0 1,0 -3.1,0M407.3,99.1a0.8,0.6 0 1,0 1.5,0a0.8,0.6 0 1,0 -1.5,0M411.4,99.5a0.8,0.6 0 1,0 1.5,0a0.8,0.6 0 1,0 -1.5,0M407.7,100.7a0.8,0.6 0 1,0 1.5,0a0.8,0.6 0 1,0 -1.5,0M411.8,101.0a0.8,0.6 0 1,0 1.5,0a0.8,0.6 0 1,0 -1.5,0M413.7,125.1a0.9,0.7 0 1,0 1.8,0a0.9,0.7 0 1,0 -1.8,0M418.6,125.6a0.9,0.7 0 1,0 1.8,0a0.9,0.7 0 1,0 -1.8,0M414.3,127.3a0.9,0.7 0 1,0 1.8,0a0.9,0.7 0 1,0 -1.8,0M419.2,127.8a0.9,0.7 0 1,0 1.8,0a0.9,0.7 0 1,0 -1.8,0M422.9,162.0a1.1,0.9 0 1,0 2.2,0a1.1,0.9 0 1,0 -2.2,0M428.8,162.8a1.1,0.9 0 1,0 2.2,0a1.1,0.9 0 1,0 -2.2,0M423.7,165.2a1.1,0.9 0 1,0 2.2,0a1.1,0.9 0 1,0 -2.2,0M429.7,166.0a1.1,0.9 0 1,0 2.2,0a1.1,0.9 0 1,0 -2.2,0M436.9,218.6a1.4,1.1 0 1,0 2.8,0a1.4,1.1 0 1,0 -2.8,0M444.5,219.8a1.4,1.1 0 1,0 2.8,0a1.4,1.1 0 1,0 -2.8,0M438.2,223.7a1.4,1.1 0 1,0 2.8,0a1.4,1.1 0 1,0 -2.8,0M446.0,224.9a1.4,1.1 0 1,0 2.8,0a1.4,1.1 0 1,0 -2.8,0M432.5,91.0a0.7,0.6 0 1,0 1.5,0a0.7,0.6 0 1,0 -1.5,0M436.5,91.3a0.7,0.6 0 1,0 1.5,0a0.7,0.6 0 1,0 -1.5,0M433.1,92.4a0.7,0.6 0 1,0 1.5,0a0.7,0.6 0 1,0 -1.5,0M437.1,92.8a0.7,0.6 0 1,0 1.5,0a0.7,0.6 0 1,0 -1.5,0M442.7,114.1a0.9,0.7 0 1,0 1.7,0a0.9,0.7 0 1,0 -1.7,0M447.3,114.5a0.9,0.7 0 1,0 1.7,0a0.9,0.7 0 1,0 -1.7,0M443.5,116.0a0.9,0.7 0 1,0 1.7,0a0.9,0.7 0 1,0 -1.7,0M448.2,116.4a0.9,0.7 0 1,0 1.7,0a0.9,0.7 0 1,0 -1.7,0M456.8,146.2a1.0,0.8 0 1,0 2.1,0a1.0,0.8 0 1,0 -2.1,0M462.4,146.8a1.0,0.8 0 1,0 2.1,0a1.0,0.8 0 1,0 -2.1,0M458.0,148.9a1.0,0.8 0 1,0 2.1,0a1.0,0.8 0 1,0 -2.1,0M463.7,149.5a1.0,0.8 0 1,0 2.1,0a1.0,0.8 0 1,0 -2.1,0M477.7,193.7a1.3,1.1 0 1,0 2.6,0a1.3,1.1 0 1,0 -2.6,0M484.7,194.7a1.3,1.1 0 1,0 2.6,0a1.3,1.1 0 1,0 -2.6,0M479.6,197.9a1.3,1.1 0 1,0 2.6,0a1.3,1.1 0 1,0 -2.6,0M486.8,198.9a1.3,1.1 0 1,0 2.6,0a1.3,1.1 0 1,0 -2.6,0M455.2,83.8a0.7,0.6 0 1,0 1.4,0a0.7,0.6 0 1,0 -1.4,0M459.0,84.0a0.7,0.6 0 1,0 1.4,0a0.7,0.6 0 1,0 -1.4,0M456.0,85.0a0.7,0.6 0 1,0 1.4,0a0.7,0.6 0 1,0 -1.4,0M459.8,85.3a0.7,0.6 0 1,0 1.4,0a0.7,0.6 0 1,0 -1.4,0M468.2,104.4a0.8,0.7 0 1,0 1.7,0a0.8,0.7 0 1,0 -1.7,0M472.7,104.8a0.8,0.7 0 1,0 1.7,0a0.8,0.7 0 1,0 -1.7,0M469.3,106.1a0.8,0.7 0 1,0 1.7,0a0.8,0.7 0 1,0 -1.7,0M473.8,106.5a0.8,0.7 0 1,0 1.7,0a0.8,0.7 0 1,0 -1.7,0M486.0,132.5a1.0,0.8 0 1,0 2.0,0a1.0,0.8 0 1,0 -2.0,0M491.3,133.0a1.0,0.8 0 1,0 2.0,0a1.0,0.8 0 1,0 -2.0,0M487.5,134.8a1.0,0.8 0 1,0 2.0,0a1.0,0.8 0 1,0 -2.0,0M492.9,135.4a1.0,0.8 0 1,0 2.0,0a1.0,0.8 0 1,0 -2.0,0M511.6,173.0a1.2,1.0 0 1,0 2.5,0a1.2,1.0 0 1,0 -2.5,0M518.2,173.8a1.2,1.0 0 1,0 2.5,0a1.2,1.0 0 1,0 -2.5,0M513.9,176.5a1.2,1.0 0 1,0 2.5,0a1.2,1.0 0 1,0 -2.5,0M520.6,177.4a1.2,1.0 0 1,0 2.5,0a1.2,1.0 0 1,0 -2.5,0M551.8,236.5a1.6,1.3 0 1,0 3.2,0a1.6,1.3 0 1,0 -3.2,0M560.5,237.9a1.6,1.3 0 1,0 3.2,0a1.6,1.3 0 1,0 -3.2,0M555.5,242.4a1.6,1.3 0 1,0 3.2,0a1.6,1.3 0 1,0 -3.2,0M564.4,243.8a1.6,1.3 0 1,0 3.2,0a1.6,1.3 0 1,0 -3.2,0M475.7,77.2a0.7,0.5 0 1,0 1.4,0a0.7,0.5 0 1,0 -1.4,0M479.4,77.4a0.7,0.5 0 1,0 1.4,0a0.7,0.5 0 1,0 -1.4,0M476.6,78.3a0.7,0.5 0 1,0 1.4,0a0.7,0.5 0 1,0 -1.4,0M480.3,78.6a0.7,0.5 0 1,0 1.4,0a0.7,0.5 0 1,0 -1.4,0M491.0,95.7a0.8,0.6 0 1,0 1.6,0a0.8,0.6 0 1,0 -1.6,0M495.2,96.1a0.8,0.6 0 1,0 1.6,0a0.8,0.6 0 1,0 -1.6,0M492.2,97.2a0.8,0.6 0 1,0 1.6,0a0.8,0.6 0 1,0 -1.6,0M496.5,97.6a0.8,0.6 0 1,0 1.6,0a0.8,0.6 0 1,0 -1.6,0M511.5,120.5a0.9,0.8 0 1,0 1.9,0a0.9,0.8 0 1,0 -1.9,0M516.5,121.0a0.9,0.8 0 1,0 1.9,0a0.9,0.8 0 1,0 -1.9,0M513.2,122.6a0.9,0.8 0 1,0 1.9,0a0.9,0.8 0 1,0 -1.9,0M518.3,123.1a0.9,0.8 0 1,0 1.9,0a0.9,0.8 0 1,0 -1.9,0M540.3,155.5a1.2,0.9 0 1,0 2.3,0a1.2,0.9 0 1,0 -2.3,0M546.5,156.2a1.2,0.9 0 1,0 2.3,0a1.2,0.9 0 1,0 -2.3,0M542.8,158.5a1.2,0.9 0 1,0 2.3,0a1.2,0.9 0 1,0 -2.3,0M549.1,159.2a1.2,0.9 0 1,0 2.3,0a1.2,0.9 0 1,0 -2.3,0M511.4,88.0a0.8,0.6 0 1,0 1.5,0a0.8,0.6 0 1,0 -1.5,0M515.4,88.3a0.8,0.6 0 1,0 1.5,0a0.8,0.6 0 1,0 -1.5,0M512.7,89.3a0.8,0.6 0 1,0 1.5,0a0.8,0.6 0 1,0 -1.5,0M516.9,89.6a0.8,0.6 0 1,0 1.5,0a0.8,0.6 0 1,0 -1.5,0M533.9,110.1a0.9,0.7 0 1,0 1.8,0a0.9,0.7 0 1,0 -1.8,0M538.7,110.5a0.9,0.7 0 1,0 1.8,0a0.9,0.7 0 1,0 -1.8,0M535.7,111.9a0.9,0.7 0 1,0 1.8,0a0.9,0.7 0 1,0 -1.8,0M540.6,112.3a0.9,0.7 0 1,0 1.8,0a0.9,0.7 0 1,0 -1.8,0M564.9,140.5a1.1,0.9 0 1,0 2.2,0a1.1,0.9 0 1,0 -2.2,0M570.7,141.1a1.1,0.9 0 1,0 2.2,0a1.1,0.9 0 1,0 -2.2,0M567.5,143.1a1.1,0.9 0 1,0 2.2,0a1.1,0.9 0 1,0 -2.2,0M573.4,143.7a1.1,0.9 0 1,0 2.2,0a1.1,0.9 0 1,0 -2.2,0M529.7,81.0a0.7,0.6 0 1,0 1.5,0a0.7,0.6 0 1,0 -1.5,0M533.6,81.3a0.7,0.6 0 1,0 1.5,0a0.7,0.6 0 1,0 -1.5,0M531.2,82.2a0.7,0.6 0 1,0 1.5,0a0.7,0.6 0 1,0 -1.5,0M535.2,82.5a0.7,0.6 0 1,0 1.5,0a0.7,0.6 0 1,0 -1.5,0M553.7,100.8a0.9,0.7 0 1,0 1.7,0a0.9,0.7 0 1,0 -1.7,0M558.3,101.1a0.9,0.7 0 1,0 1.7,0a0.9,0.7 0 1,0 -1.7,0M555.7,102.4a0.9,0.7 0 1,0 1.7,0a0.9,0.7 0 1,0 -1.7,0M560.3,102.8a0.9,0.7 0 1,0 1.7,0a0.9,0.7 0 1,0 -1.7,0M546.4,74.7a0.7,0.6 0 1,0 1.4,0a0.7,0.6 0 1,0 -1.4,0M550.1,74.9a0.7,0.6 0 1,0 1.4,0a0.7,0.6 0 1,0 -1.4,0M547.9,75.8a0.7,0.6 0 1,0 1.4,0a0.7,0.6 0 1,0 -1.4,0M551.7,76.0a0.7,0.6 0 1,0 1.4,0a0.7,0.6 0 1,0 -1.4,0M561.5,68.9a0.7,0.5 0 1,0 1.4,0a0.7,0.5 0 1,0 -1.4,0M565.1,69.1a0.7,0.5 0 1,0 1.4,0a0.7,0.5 0 1,0 -1.4,0M563.1,69.9a0.7,0.5 0 1,0 1.4,0a0.7,0.5 0 1,0 -1.4,0M566.8,70.1a0.7,0.5 0 1,0 1.4,0a0.7,0.5 0 1,0 -1.4,0"/>
<rect width="573" height="267" fill="url(#fog)"/>
</svg><!--/VP-->

<!-- viewport objects -->
<svg class="a" style="left:380px;top:155px" width="60" height="50">
<defs><radialGradient id="bl" cx="0.5" cy="0.3" r="0.75"><stop offset="0" stop-color="#5cbaf2"/><stop offset="0.65" stop-color="#3c9ad8"/><stop offset="1" stop-color="#2a72ae"/></radialGradient>
<linearGradient id="chr" x1="0" y1="0" x2="1" y2="1"><stop offset="0" stop-color="#e8ecf0"/><stop offset="0.45" stop-color="#8a9096"/><stop offset="0.7" stop-color="#d8dce0"/><stop offset="1" stop-color="#6a7076"/></linearGradient></defs>
<path d="M13,21Q11.5,14.5 18,15Q25,16 25,27Q25,38 19,38.5Q14,37 13,21Z" fill="#23558a"/>
<path d="M21.5,33Q24,31 28,33L28.5,39Q25,40.5 22,39Z" fill="#3a8fd0"/>
<path d="M42,33Q50,31 53.5,34L53,42Q47,44 43,41Z" fill="#3a8fd0"/>
<circle cx="38.4" cy="21.5" r="15.8" fill="url(#bl)"/>
<path d="M48,24.5L53.5,23.5" stroke="#9aa" stroke-width="0.8"/>
<ellipse cx="35.8" cy="23.9" rx="12.3" ry="11.8" fill="url(#chr)"/>
<ellipse cx="35.8" cy="23.9" rx="8.6" ry="8.4" fill="#3a4046"/>
<ellipse cx="35.8" cy="23.9" rx="7.4" ry="7.2" fill="#b0b6bc"/>
<circle cx="35.8" cy="23.9" r="6" fill="#46a6e8"/>
<circle cx="35.8" cy="23.9" r="1.9" fill="#101418"/>
</svg>
<svg class="a" style="left:600px;top:60px" width="80" height="90">
<defs><linearGradient id="cf" x1="0" y1="0" x2="0" y2="1"><stop offset="0" stop-color="#626262"/><stop offset="1" stop-color="#4e4e4e"/></linearGradient></defs>
<path d="M11.7,29.7L28.2,12.4L70.3,15.7L65.4,34.7Z" fill="#585858"/>
<path d="M11.7,29.7L65.4,34.7L62.9,77.6L15.8,71.8Z" fill="url(#cf)"/>
<path d="M65.4,34.7L70.3,15.7L69.5,66L62.9,77.6Z" fill="#3c3c3c"/>
<path d="M11.7,29.7L65.4,34.7L70.3,15.7" fill="none" stroke="#8a8a8a" stroke-width="0.8" stroke-dasharray="6 2"/>
<path d="M39.6,17.6L54,18.8L33.4,24.4L50,26.5" fill="none" stroke="#4688e0" stroke-width="1.3"/>
<path d="M24,55.6L32.4,56.6" stroke="#55e055" stroke-width="2.6"/>
<path d="M33.4,44L41.7,56.4L52,45M41.7,56.4V66" fill="none" stroke="#55e055" stroke-width="3.2"/>
<g fill="#d03030"><circle cx="68" cy="32" r="0.6"/><circle cx="67.5" cy="42" r="0.6"/><circle cx="67" cy="52" r="0.6"/><circle cx="66.5" cy="62" r="0.6"/></g>
</svg>
<div class="spin" style="left:382px;top:21px;width:48px"></div>
<div class="lbl" style="left:387px;top:26px;font-size:11px;color:#e6e6e6">5.00</div>
<svg class="a" style="left:418px;top:24px" width="9" height="15"><path d="M0.5,4H8L4.25,0.5Z M0.5,10.5H8L4.25,14Z" fill="#9a9a9c"/></svg>
<div class="a" style="left:435px;top:21px;width:17px;height:20px;background:#2b2c2e;border-radius:2px"></div>
<div class="lbl" style="left:440px;top:26px;font-size:11px">1</div>
<div class="lbl" style="left:459px;top:26px;font-size:11px">2</div>
<div class="lbl" style="left:477px;top:26px;font-size:11px">3</div>
<div class="a" style="left:493px;top:23px;width:1px;height:15px;background:#2a2b2d"></div>
<div class="lbl" style="left:500px;top:26px;font-size:11px">X:</div>
<div class="spin" style="left:514px;top:21px;width:47px"></div>
<div class="a" style="left:518px;top:26px;width:23px;overflow:hidden;font-size:11px;white-space:nowrap;color:#e6e6e6">-19.4</div>
<svg class="a" style="left:550px;top:24px" width="9" height="15"><path d="M0.5,4H8L4.25,0.5Z M0.5,10.5H8L4.25,14Z" fill="#9a9a9c"/></svg>
<div class="lbl" style="left:571px;top:26px;font-size:11px">Y:</div>
<div class="spin" style="left:583px;top:21px;width:47px"></div>
<div class="lbl" style="left:588px;top:26px;font-size:11px">2.26</div>
<svg class="a" style="left:619px;top:24px" width="9" height="15"><path d="M0.5,4H8L4.25,0.5Z M0.5,10.5H8L4.25,14Z" fill="#9a9a9c"/></svg>
<div class="lbl" style="left:641px;top:26px;font-size:11px">Z:</div>
<div class="spin" style="left:654px;top:21px;width:47px"></div>
<div class="lbl" style="left:658px;top:26px;font-size:11px">4.69</div>
<svg class="a" style="left:689px;top:24px" width="9" height="15"><path d="M0.5,4H8L4.25,0.5Z M0.5,10.5H8L4.25,14Z" fill="#9a9a9c"/></svg>

<!-- ============ ASSET PANEL ============ -->
<div class="panel" style="left:0;top:333px;width:706px;height:212px;border:1px solid #4a4b4e"></div>
<div class="tab act" style="left:1px;top:315px;width:107px;height:20px">
  <span class="t" style="left:8px">Asset Browser</span>
</div>
<div class="list" style="left:4px;top:336px;width:158px;height:206px;background:#262729"></div>
<div class="a" style="left:5px;top:337px;width:141px;height:18px;background:#29506e"></div>
<div class="a" style="left:5px;top:337px;width:141px;height:203px;overflow:hidden">
<svg class="a" style="left:4px;top:7px" width="8" height="5"><path d="M0,0.5H7.5L3.75,4.3Z" fill="#8a8b8d"/></svg>
<svg class="a" style="left:18px;top:2px" width="17" height="15"><use href="#fb"/><path d="M5,9.5L9,6L13,9.5M6.2,8.8V13H11.8V8.8" fill="none" stroke="#3a7cb4" stroke-width="1"/></svg>
<div class="rt" style="left:40px;top:4px;color:#e8e8e8">Project</div>
<svg class="a" style="left:19px;top:25px" width="8" height="5"><path d="M0,0.5H7.5L3.75,4.3Z" fill="#8a8b8d"/></svg>
<svg class="a" style="left:33px;top:20px" width="17" height="15"><use href="#fb"/></svg>
<div class="rt" style="left:55px;top:21px;color:#e8e8e8">Materials</div>
<svg class="a" style="left:48px;top:38px" width="17" height="15"><use href="#fb"/></svg>
<div class="rt" style="left:70px;top:39px;color:#e8e8e8">Materials</div>
<svg class="a" style="left:20px;top:60px" width="5" height="8"><path d="M0.5,0V7.5L4.3,3.75Z" fill="#8a8b8d"/></svg>
<svg class="a" style="left:33px;top:56px" width="17" height="15"><use href="#fb"/></svg>
<div class="rt" style="left:55px;top:57px;color:#e8e8e8">device_calcul...</div>
<svg class="a" style="left:33px;top:74px" width="17" height="15"><use href="#fb"/></svg>
<div class="rt" style="left:55px;top:75px;color:#e8e8e8">imp</div>
<svg class="a" style="left:4px;top:97px" width="8" height="5"><path d="M0,0.5H7.5L3.75,4.3Z" fill="#8a8b8d"/></svg>
<svg class="a" style="left:18px;top:92px" width="17" height="15"><use href="#fg"/><path d="M4,10L7.5,7L10,9" fill="none" stroke="#5a9a40" stroke-width="1"/></svg>
<div class="rt" style="left:40px;top:93px;color:#e8e8e8">Core</div>
<svg class="a" style="left:19px;top:115px" width="8" height="5"><path d="M0,0.5H7.5L3.75,4.3Z" fill="#8a8b8d"/></svg>
<svg class="a" style="left:33px;top:110px" width="17" height="15"><use href="#fg"/></svg>
<div class="rt" style="left:55px;top:111px;color:#e8e8e8">materials</div>
<svg class="a" style="left:34px;top:133px" width="8" height="5"><path d="M0,0.5H7.5L3.75,4.3Z" fill="#8a8b8d"/></svg>
<svg class="a" style="left:48px;top:128px" width="17" height="15"><use href="#fg"/></svg>
<div class="rt" style="left:70px;top:129px;color:#e8e8e8">default</div>
<svg class="a" style="left:63px;top:146px" width="17" height="15"><use href="#fg"/></svg>
<div class="rt" style="left:85px;top:147px;color:#e8e8e8">billboards</div>
<svg class="a" style="left:63px;top:164px" width="17" height="15"><use href="#fg"/></svg>
<div class="rt" style="left:85px;top:165px;color:#e8e8e8">clouds</div>
<svg class="a" style="left:63px;top:182px" width="17" height="15"><use href="#fg"/></svg>
<div class="rt" style="left:85px;top:183px;color:#e8e8e8">debug</div>
<svg class="a" style="left:63px;top:200px" width="17" height="15"><use href="#fg"/></svg>
</div>
<div class="a" style="left:149px;top:340px;width:9px;height:80px;background:#4e4f52;border-radius:3px"></div>
<div class="btn" style="left:186px;top:337px;width:62px;height:18px;line-height:19px">Project</div>
<div class="btn" style="left:331px;top:337px;width:58px;height:18px;line-height:19px;text-align:left;padding-left:10px">Filter</div>
<svg class="a" style="left:376px;top:344px" width="10" height="6"><path d="M0.5,0.5H9.5L5,5.5Z" fill="#eee"/></svg>
<div class="btn" style="left:392px;top:337px;width:60px;height:18px;line-height:19px">Import</div>
<div class="btn" style="left:455px;top:337px;width:58px;height:18px;line-height:19px;text-align:left;padding-left:6px">Create</div>
<svg class="a" style="left:499px;top:344px" width="10" height="6"><path d="M0.5,0.5H9.5L5,5.5Z" fill="#eee"/></svg>
<svg class="a" style="left:168px;top:343px" width="7" height="10"><path d="M5.5,1L1.5,5L5.5,9" fill="none" stroke="#5c5d60" stroke-width="1"/></svg>
<svg class="a" style="left:311px;top:343px" width="7" height="10"><path d="M1.5,1L5.5,5L1.5,9" fill="none" stroke="#6c6d70" stroke-width="1"/></svg>

<div class="a" style="left:164px;top:358px;width:350px;height:161px;background:#262729;border-radius:2px;overflow:hidden">
<div class="a" style="left:333px;top:0;width:17px;height:161px;background:#2a2b2d"></div>
<div class="a" style="left:12px;top:-15px;width:37px;height:37px;border-radius:3px"><svg width="37" height="37" style="position:absolute;left:0;top:-1px"><path d="M0.5,2H14L16,4H35V36.5H0.5Z" fill="#3c88c2"/><rect x="2" y="5" width="32" height="4" fill="#e6ecf0"/><path d="M0.5,8H36.5V35.5Q36.5,36.5 35.5,36.5H1.5Q0.5,36.5 0.5,35.5Z" fill="url(#gbig)"/><path d="M1,9V35.5" stroke="#2f6fa6" stroke-width="1.4"/><path d="M2.2,10V34.5" stroke="#9ccbe8" stroke-width="0.8"/></svg></div>
<div class="a" style="left:71px;top:-15px;width:37px;height:37px;border-radius:3px"><svg width="37" height="37" style="position:absolute;left:0;top:-1px"><path d="M0.5,2H14L16,4H35V36.5H0.5Z" fill="#3c88c2"/><rect x="2" y="5" width="32" height="4" fill="#e6ecf0"/><path d="M0.5,8H36.5V35.5Q36.5,36.5 35.5,36.5H1.5Q0.5,36.5 0.5,35.5Z" fill="url(#gbig)"/><path d="M1,9V35.5" stroke="#2f6fa6" stroke-width="1.4"/><path d="M2.2,10V34.5" stroke="#9ccbe8" stroke-width="0.8"/></svg></div>
<div class="a" style="left:130px;top:-15px;width:37px;height:37px;border-radius:3px"><svg width="37" height="37" style="position:absolute;left:0;top:-1px"><path d="M0.5,2H14L16,4H35V36.5H0.5Z" fill="#3c88c2"/><rect x="2" y="5" width="32" height="4" fill="#e6ecf0"/><path d="M0.5,8H36.5V35.5Q36.5,36.5 35.5,36.5H1.5Q0.5,36.5 0.5,35.5Z" fill="url(#gbig)"/><path d="M1,9V35.5" stroke="#2f6fa6" stroke-width="1.4"/><path d="M2.2,10V34.5" stroke="#9ccbe8" stroke-width="0.8"/></svg></div>
<div class="a" style="left:189px;top:-15px;width:37px;height:37px;background:#3b3d40;border-radius:3px"></div>
<svg class="a" style="left:253px;top:-15px" width="28" height="36"><path d="M0.5,0.5H20L27.5,8V35.5H0.5Z" fill="#f0f0f0"/><path d="M10,17L6,19.5L10,22M18,17L22,19.5L18,22M15.5,16L12.5,23" fill="none" stroke="#666" stroke-width="1.1"/></svg>
<div class="a" style="left:12px;top:44px;width:37px;height:37px;background:#3b3d40;border-radius:3px"><div style="position:absolute;left:1px;top:1px;width:35px;height:35px;border-radius:50%;background:linear-gradient(150deg,#727272,#4e4e4e)"></div></div>
<div class="a" style="left:71px;top:44px;width:37px;height:37px;background:#3b3d40;border-radius:3px"><div style="position:absolute;left:1px;top:1px;width:35px;height:35px;border-radius:50%;background:linear-gradient(150deg,#f6f6f6,#b4b4b4)"></div></div>
<div class="a" style="left:130px;top:44px;width:37px;height:37px;background:#3b3d40;border-radius:3px"><div style="position:absolute;left:1px;top:1px;width:35px;height:35px;border-radius:50%;background:linear-gradient(150deg,#dcdce0,#9a9aa0)"></div></div>
<svg class="a" style="left:194px;top:44px" width="28" height="36"><path d="M0.5,0.5H19L27.5,9V35.5H0.5Z" fill="#ececec"/><path d="M19,0.5V9H27.5" fill="#d8d8d8"/><circle cx="13.5" cy="18" r="8.5" fill="#5a5a5a"/><path d="M10,12.5Q13,11 16,12.5L17,15L15,17L16,22L14,24.5L12.5,20L10.5,18.5L8.5,15Z" fill="#f0f0f0"/><path d="M17.5,12L20,14.5" stroke="#f0f0f0" stroke-width="1.4"/></svg>
<div class="a" style="left:248px;top:44px;width:37px;height:37px;background:#3b3d40;border-radius:3px"><svg width="37" height="37"><defs><linearGradient id="chm" x1="0" y1="0" x2="1" y2="1"><stop offset="0" stop-color="#d8d8d8"/><stop offset="0.35" stop-color="#8a8a8a"/><stop offset="0.6" stop-color="#f4f4f4"/><stop offset="1" stop-color="#606060"/></linearGradient></defs>
<circle cx="18.3" cy="17.4" r="17.2" fill="#0e0e0e"/>
<path d="M1.5,21Q2,5 16,1Q27,0 31,5Q34,13 27,19Q18,25 1.5,21Z" fill="url(#chm)"/>
<ellipse cx="21" cy="16.5" rx="5" ry="3" fill="#fff" opacity="0.55"/>
<ellipse cx="18" cy="12.5" rx="5.5" ry="3.3" fill="#9a9a9a" stroke="#1a1a1a" stroke-width="1.2"/>
<ellipse cx="18" cy="12.3" rx="3.4" ry="1.9" fill="#b8b8b8" stroke="#eee" stroke-width="0.6"/>
<ellipse cx="9.5" cy="29" rx="4" ry="2.4" fill="#4a4a4a"/>
</svg></div>
<div class="a" style="left:12px;top:103px;width:37px;height:37px;background:#3b3d40;border-radius:3px"><div style="position:absolute;left:1px;top:1px;width:35px;height:35px;border-radius:50%;background:linear-gradient(150deg,#b03434,#7e1e1e)"></div></div>
<div class="a" style="left:71px;top:103px;width:37px;height:37px;background:#3b3d40;border-radius:3px"><svg width="37" height="37">
<ellipse cx="17" cy="29.5" rx="7.5" ry="3.2" fill="#9a9a9a" stroke="#555" stroke-width="0.6"/>
<path d="M9,28.5Q14,25.5 19,27L19,29Q14,28 10.5,30Z" fill="#3a8fd0"/>
<path d="M19,27Q27,25 28,30Q27,35 21,36L20,33Q24,32 23.5,30Q22,29 19,29.5Z" fill="#3a8fd0"/>
<circle cx="21.3" cy="15.9" r="7.6" fill="#3e9be0"/>
<path d="M16,18.5L28.5,18.5" stroke="#2a5a88" stroke-width="0.6"/>
<ellipse cx="14" cy="15.5" rx="6.3" ry="7" fill="#c8ccd0" stroke="#444" stroke-width="0.8"/>
<ellipse cx="14" cy="15.5" rx="4.3" ry="5" fill="#3e9be0" stroke="#2a4a6a" stroke-width="0.6"/>
<ellipse cx="13.3" cy="14.8" rx="1.2" ry="1.6" fill="#111"/>
</svg></div>
<div class="a" style="left:130px;top:103px;width:37px;height:37px;background:#3b3d40;border-radius:3px"><svg width="37" height="37"><path d="M8,15L36,20.3" stroke="#a8a8a8" stroke-width="2.6"/></svg></div>
<div class="a" style="left:189px;top:103px;width:37px;height:37px;background:#3b3d40;border-radius:3px"><svg width="37" height="37"><ellipse cx="18.5" cy="21.5" rx="17.5" ry="8" fill="#f2f2f2"/><path d="M5,18Q8,13 12,15Q14,11 17,14Q20,11 23,14Q26,12 28,15Q32,14 32,18Q18,22 5,18Z" fill="#dcdcdc"/><path d="M8,18Q18,21 29,18" stroke="#aaa" stroke-width="0.7" fill="none"/></svg></div>
<div class="a" style="left:248px;top:103px;width:37px;height:37px;background:#3b3d40;border-radius:3px"><svg width="37" height="37"><rect x="3.5" y="13" width="6" height="10.5" rx="2.5" fill="#f0f0f0"/><rect x="24.2" y="15" width="3.4" height="4.2" fill="#e8e8e8"/></svg></div>
<div class="a" style="left:0.5px;top:26px;width:60px;text-align:center;white-space:nowrap;color:#e4e4e4">Materials</div>
<div class="a" style="left:59.5px;top:26px;width:60px;text-align:center;white-space:nowrap;color:#e4e4e4">device_...</div>
<div class="a" style="left:118.5px;top:26px;width:60px;text-align:center;white-space:nowrap;color:#e4e4e4">imp</div>
<div class="a" style="left:177.5px;top:26px;width:60px;text-align:center;white-space:nowrap;color:#e4e4e4">balls.no...</div>
<div class="a" style="left:236.5px;top:26px;width:60px;text-align:center;white-space:nowrap;color:#e4e4e4">new.cpp</div>
<div class="a" style="left:0.5px;top:85px;width:60px;text-align:center;white-space:nowrap;color:#e4e4e4">ground...</div>
<div class="a" style="left:59.5px;top:85px;width:60px;text-align:center;white-space:nowrap;color:#e4e4e4">mesh_b...</div>
<div class="a" style="left:118.5px;top:85px;width:60px;text-align:center;white-space:nowrap;color:#e4e4e4">mesh_b...</div>
<div class="a" style="left:177.5px;top:85px;width:60px;text-align:center;white-space:nowrap;color:#e4e4e4">new.wo...</div>
<div class="a" style="left:236.5px;top:85px;width:60px;text-align:center;white-space:nowrap;color:#e4e4e4">material...</div>
<div class="a" style="left:0.5px;top:144px;width:60px;text-align:center;white-space:nowrap;color:#e4e4e4">mesh_b...</div>
<div class="a" style="left:59.5px;top:144px;width:60px;text-align:center;white-space:nowrap;color:#e4e4e4">material...</div>
<div class="a" style="left:118.5px;top:144px;width:60px;text-align:center;white-space:nowrap;color:#e4e4e4">cigarett...</div>
<div class="a" style="left:177.5px;top:144px;width:60px;text-align:center;white-space:nowrap;color:#e4e4e4">ashtray....</div>
<div class="a" style="left:236.5px;top:144px;width:60px;text-align:center;white-space:nowrap;color:#e4e4e4">group.n...</div>
<div class="a" style="left:61px;top:103px;width:57px;height:54px;border:1px dotted #e0e0e0"></div>
</div>
<div class="a" style="left:501px;top:379px;width:9px;height:136px;background:#4e4f52;border-radius:3px"></div>

<div class="lbl" style="left:170px;top:526px;font-size:11px;color:#c8c8c8">15 items</div>
<div class="a" style="left:415px;top:528px;width:98px;height:6px;background:#222325;border-radius:3px"></div>
<div class="a" style="left:417px;top:526px;width:10px;height:11px;background:#a5a6a8;border-radius:2px"></div>

<svg class="a" style="left:540px;top:365px" width="140" height="125">
<defs><linearGradient id="bk" x1="0" y1="0" x2="0.3" y2="1"><stop offset="0" stop-color="#3f84b8"/><stop offset="0.6" stop-color="#336f9e"/><stop offset="1" stop-color="#24557c"/></linearGradient>
<linearGradient id="fr" x1="0" y1="0" x2="0" y2="1"><stop offset="0" stop-color="#66b6e3"/><stop offset="1" stop-color="#58a8dc"/></linearGradient></defs>
<path d="M6,11Q6,6.8 10.5,6.8H42.4L50.2,14.8H121.5Q126,14.8 126,19.5V114Q126,118.5 121.5,118.5H10.5Q6,118.5 6,114Z" fill="url(#bk)"/>
<path d="M6.5,12V114" stroke="#5aa2d4" stroke-width="1"/>
<rect x="11.9" y="22.9" width="108.6" height="93" fill="#fdfdfd"/>
<rect x="13" y="24" width="107.5" height="92" fill="#d6dadc"/>
<path d="M15.4,41.5Q15.4,37.2 19.7,37.2H129.7Q134,37.2 134,41.5V114.2Q134,118.5 129.7,118.5H15.4Z" fill="url(#fr)"/>
<path d="M16,42Q16,38 20,38H129.5" stroke="#7cc6ec" stroke-width="1" fill="none"/>
<path d="M6,110Q6,118.5 14,118.5H17V108Q14,105 10,107Z" fill="#2a5f88"/>
<g fill="none" stroke="#3371a6" stroke-width="3.8" stroke-linejoin="miter"><path d="M40,81.5L70.5,51.8L101,81.5"/>
<path d="M48,73V105.5H61.5V86.5H79.5V105.5H93V73"/>
<path d="M79.5,61V53.5H92V74"/></g><g fill="none" stroke="#4f94c8" stroke-width="1" stroke-linejoin="miter"><path d="M40,81.5L70.5,51.8L101,81.5"/>
<path d="M48,73V105.5H61.5V86.5H79.5V105.5H93V73"/>
<path d="M79.5,61V53.5H92V74"/></g>
</svg>
<div class="a" style="left:590px;top:494px;font-weight:bold;color:#c9c9c9">Project</div>
<div class="a" style="left:583px;top:510px;font-size:11px;color:#c9c9c9">Assets : 12</div>
<div class="a" style="left:576px;top:523px;font-size:11px;color:#c9c9c9">Directories : 3</div>

<div class="a" style="left:0;top:0;width:1px;height:545px;background:#56677a"></div>
<svg class="a" style="left:55px;top:8px" width="7" height="7"><path d="M1,1L6,6M6,1L1,6" stroke="#c4c4c4" stroke-width="1.3"/></svg>
<svg class="a" style="left:191px;top:9px" width="7" height="7"><path d="M1,1L6,6M6,1L1,6" stroke="#c4c4c4" stroke-width="1.3"/></svg>
<svg class="a" style="left:263px;top:9px" width="7" height="7"><path d="M1,1L6,6M6,1L1,6" stroke="#b8b8b8" stroke-width="1.3"/></svg>
<svg class="a" style="left:96px;top:322px" width="7" height="7"><path d="M1,1L6,6M6,1L1,6" stroke="#c4c4c4" stroke-width="1.3"/></svg>
<!-- orange arrows -->
<svg class="a" style="left:0;top:0" width="706" height="545">
<g stroke="#ff8a00" stroke-width="4.6" stroke-linecap="butt"><path d="M253.7,465.5L71,192"/><path d="M257.2,465L395,224"/></g>
<path d="M57.2,172.2L61.6,196.3L78.4,185.4Z" fill="#ff8a00"/>
<path d="M406.9,203.8L386.8,219L404.6,228.3Z" fill="#ff8a00"/>
</svg>
</body></html>
